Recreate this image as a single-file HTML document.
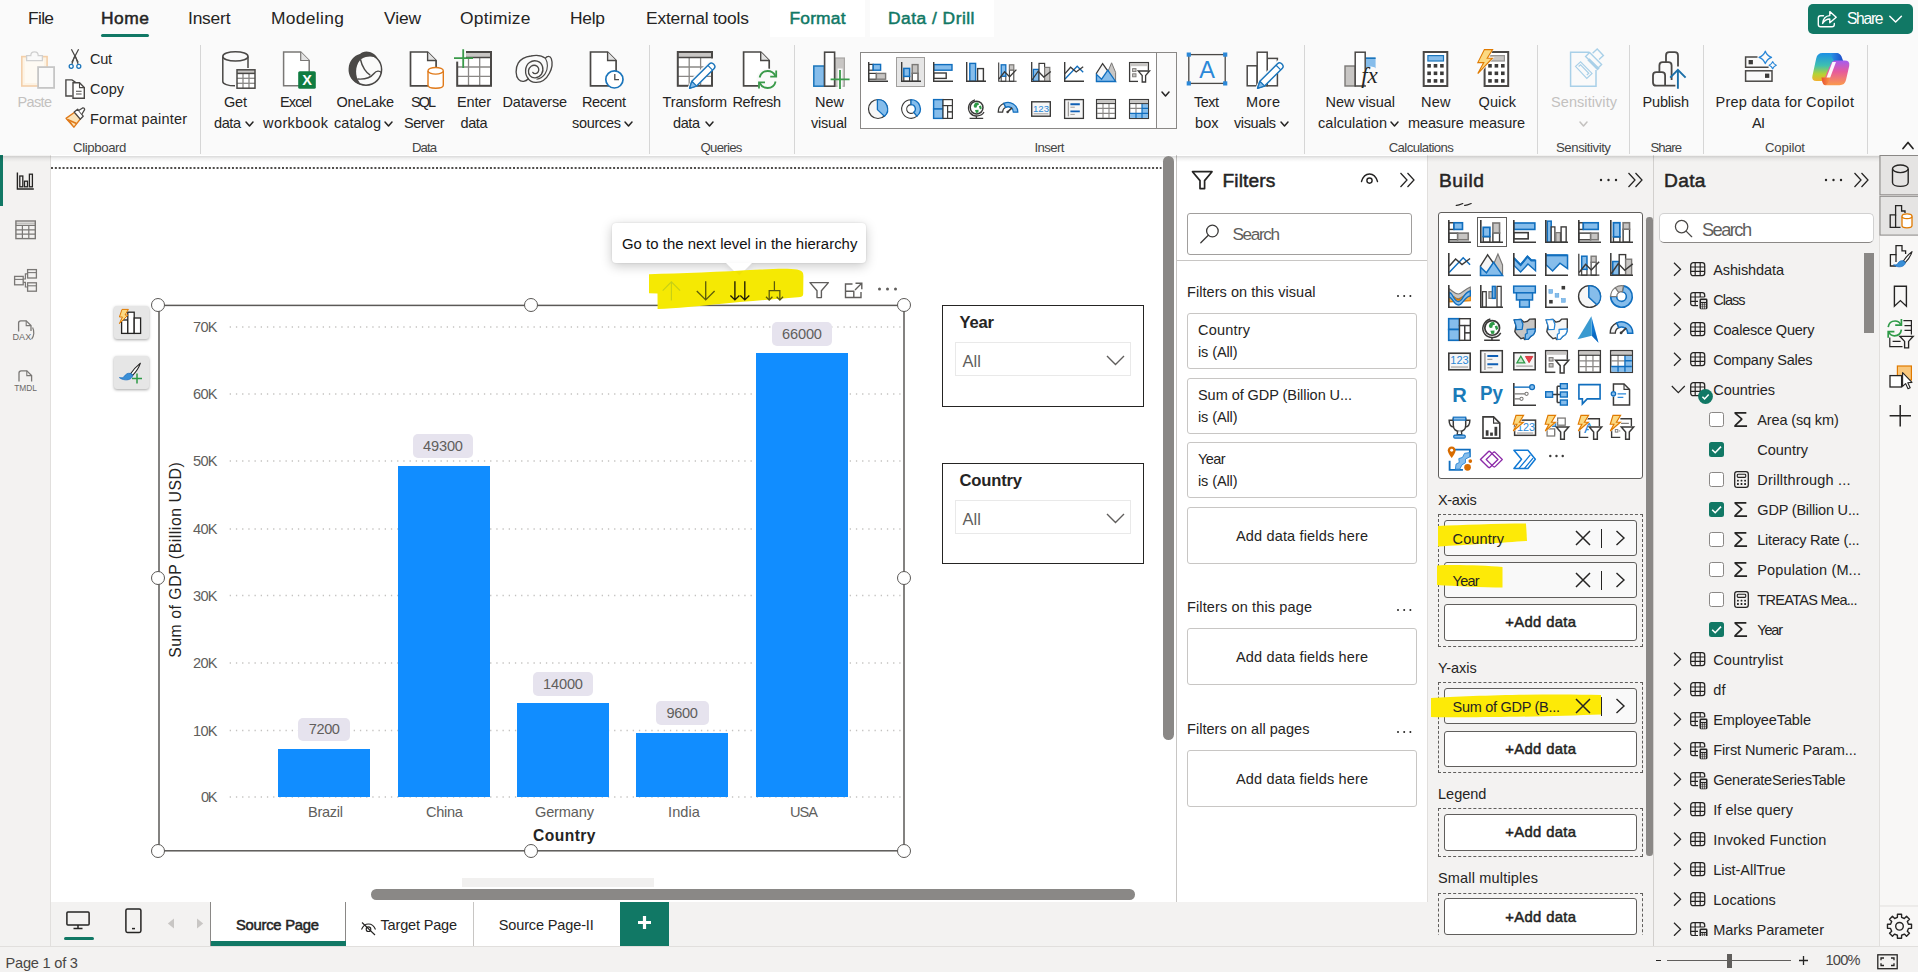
<!DOCTYPE html>
<html lang="en"><head><meta charset="utf-8"><title>Power BI Desktop - Source Page</title>
<style>
html,body{margin:0;padding:0;}
body{width:1918px;height:972px;overflow:hidden;position:relative;background:#f3f2f1;font-family:"Liberation Sans",sans-serif;}
body div,body span,body svg{position:absolute;display:block;}
span{white-space:nowrap;}
svg{overflow:visible;}
</style></head><body>
<div style="left:0px;top:0px;width:1918px;height:156px;background:#fafafa;"></div>
<div style="left:770px;top:0px;width:94.5px;height:37px;background:#fff;"></div>
<div style="left:869.5px;top:0px;width:124.5px;height:37px;background:#fff;"></div>
<div style="left:51px;top:155px;width:1125px;height:747px;background:#fff;"></div>
<div style="left:0px;top:155px;width:50px;height:791px;background:#f3f2f1;border-right:1px solid #e1dfdd;"></div>
<div style="left:0px;top:155px;width:3px;height:50.5px;background:#117865;"></div>
<div style="left:1175.5px;top:155px;width:251.5px;height:746.7px;background:#fff;border-left:1px solid #c8c6c4;box-sizing:border-box;"></div>
<div style="left:1427px;top:155px;width:226px;height:791px;background:#f3f2f1;border-left:1px solid #e1dfdd;box-sizing:border-box;"></div>
<div style="left:1653px;top:155px;width:226px;height:791px;background:#f3f2f1;border-left:1px solid #d2d0ce;box-sizing:border-box;"></div>
<div style="left:1879px;top:155px;width:39px;height:791px;background:#f8f7f6;border-left:1px solid #e1dfdd;box-sizing:border-box;"></div>
<div style="left:51px;top:901.7px;width:1376.5px;height:44.3px;background:#f3f2f1;"></div>
<div style="left:0px;top:156px;width:1918px;height:5.5px;background:linear-gradient(to bottom,rgba(0,0,0,0.15),rgba(0,0,0,0.05) 45%,rgba(0,0,0,0));"></div>
<span style="left:28.00px;top:10.27px;font-size:17.4px;line-height:17.4px;letter-spacing:-0.679px;color:#252423;">File</span>
<span style="left:101.00px;top:10.27px;font-size:17.4px;line-height:17.4px;letter-spacing:0.529px;color:#252423;-webkit-text-stroke:0.5px currentColor;">Home</span>
<div style="left:101px;top:34px;width:48px;height:3px;background:#117865;border-radius:1.5px;"></div>
<span style="left:188.00px;top:10.27px;font-size:17.4px;line-height:17.4px;letter-spacing:-0.203px;color:#252423;">Insert</span>
<span style="left:271.00px;top:10.27px;font-size:17.4px;line-height:17.4px;letter-spacing:0.341px;color:#252423;">Modeling</span>
<span style="left:384.00px;top:10.27px;font-size:17.4px;line-height:17.4px;letter-spacing:-0.133px;color:#252423;">View</span>
<span style="left:460.00px;top:10.27px;font-size:17.4px;line-height:17.4px;letter-spacing:0.264px;color:#252423;">Optimize</span>
<span style="left:570.00px;top:10.27px;font-size:17.4px;line-height:17.4px;letter-spacing:-0.262px;color:#252423;">Help</span>
<span style="left:646.00px;top:10.27px;font-size:17.4px;line-height:17.4px;letter-spacing:-0.186px;color:#252423;">External tools</span>
<span style="left:789.50px;top:10.27px;font-size:17.4px;line-height:17.4px;letter-spacing:0.179px;color:#117865;-webkit-text-stroke:0.5px currentColor;">Format</span>
<span style="left:888.00px;top:10.27px;font-size:17.4px;line-height:17.4px;letter-spacing:0.480px;color:#117865;-webkit-text-stroke:0.5px currentColor;">Data / Drill</span>
<div style="left:1807.5px;top:4px;width:105px;height:30px;background:#117865;border-radius:5px;"></div>
<span style="left:1847.00px;top:11.19px;font-size:15.6px;line-height:15.6px;letter-spacing:-1.282px;color:#fff;">Share</span>
<span style="left:17.50px;top:95.23px;font-size:14.5px;line-height:14.5px;letter-spacing:-0.645px;color:#c3c1bf;">Paste</span>
<span style="left:90.00px;top:51.53px;font-size:14.5px;line-height:14.5px;letter-spacing:-0.282px;color:#252423;">Cut</span>
<span style="left:90.00px;top:81.73px;font-size:14.5px;line-height:14.5px;letter-spacing:0.050px;color:#252423;">Copy</span>
<span style="left:90.00px;top:111.53px;font-size:14.5px;line-height:14.5px;letter-spacing:0.209px;color:#252423;">Format painter</span>
<span style="left:224.00px;top:95.23px;font-size:14.5px;line-height:14.5px;letter-spacing:-0.186px;color:#252423;">Get</span>
<span style="left:214.00px;top:115.93px;font-size:14.5px;line-height:14.5px;letter-spacing:-0.407px;color:#252423;">data</span>
<svg style="left:244.5px;top:121.0px;" width="9" height="6" viewBox="0 0 9 6"><path d="M1 1 L4.5 5 L8 1" fill="none" stroke="#252423" stroke-width="1.5" stroke-linecap="round" stroke-linejoin="round"/></svg>
<span style="left:280.00px;top:95.23px;font-size:14.5px;line-height:14.5px;letter-spacing:-0.864px;color:#252423;">Excel</span>
<span style="left:263.00px;top:115.93px;font-size:14.5px;line-height:14.5px;letter-spacing:0.420px;color:#252423;">workbook</span>
<span style="left:336.50px;top:95.23px;font-size:14.5px;line-height:14.5px;letter-spacing:-0.225px;color:#252423;">OneLake</span>
<span style="left:334.00px;top:115.93px;font-size:14.5px;line-height:14.5px;letter-spacing:0.040px;color:#252423;">catalog</span>
<svg style="left:384.0px;top:121.0px;" width="9" height="6" viewBox="0 0 9 6"><path d="M1 1 L4.5 5 L8 1" fill="none" stroke="#252423" stroke-width="1.5" stroke-linecap="round" stroke-linejoin="round"/></svg>
<span style="left:411.00px;top:95.23px;font-size:14.5px;line-height:14.5px;letter-spacing:-2.007px;color:#252423;">SQL</span>
<span style="left:404.00px;top:115.93px;font-size:14.5px;line-height:14.5px;letter-spacing:-0.441px;color:#252423;">Server</span>
<span style="left:457.00px;top:95.23px;font-size:14.5px;line-height:14.5px;letter-spacing:-0.164px;color:#252423;">Enter</span>
<span style="left:460.50px;top:115.93px;font-size:14.5px;line-height:14.5px;letter-spacing:-0.407px;color:#252423;">data</span>
<span style="left:502.50px;top:95.23px;font-size:14.5px;line-height:14.5px;letter-spacing:-0.198px;color:#252423;">Dataverse</span>
<span style="left:582.00px;top:95.23px;font-size:14.5px;line-height:14.5px;letter-spacing:-0.389px;color:#252423;">Recent</span>
<span style="left:572.00px;top:115.93px;font-size:14.5px;line-height:14.5px;letter-spacing:-0.295px;color:#252423;">sources</span>
<svg style="left:624.0px;top:121.0px;" width="9" height="6" viewBox="0 0 9 6"><path d="M1 1 L4.5 5 L8 1" fill="none" stroke="#252423" stroke-width="1.5" stroke-linecap="round" stroke-linejoin="round"/></svg>
<span style="left:662.50px;top:95.23px;font-size:14.5px;line-height:14.5px;letter-spacing:-0.128px;color:#252423;">Transform</span>
<span style="left:673.00px;top:115.93px;font-size:14.5px;line-height:14.5px;letter-spacing:-0.407px;color:#252423;">data</span>
<svg style="left:704.5px;top:121.0px;" width="9" height="6" viewBox="0 0 9 6"><path d="M1 1 L4.5 5 L8 1" fill="none" stroke="#252423" stroke-width="1.5" stroke-linecap="round" stroke-linejoin="round"/></svg>
<span style="left:732.50px;top:95.23px;font-size:14.5px;line-height:14.5px;letter-spacing:-0.379px;color:#252423;">Refresh</span>
<span style="left:815.00px;top:95.23px;font-size:14.5px;line-height:14.5px;letter-spacing:-0.004px;color:#252423;">New</span>
<span style="left:811.00px;top:115.93px;font-size:14.5px;line-height:14.5px;letter-spacing:-0.214px;color:#252423;">visual</span>
<span style="left:1194.00px;top:95.23px;font-size:14.5px;line-height:14.5px;letter-spacing:-0.531px;color:#252423;">Text</span>
<span style="left:1195.00px;top:115.93px;font-size:14.5px;line-height:14.5px;letter-spacing:0.061px;color:#252423;">box</span>
<span style="left:1246.00px;top:95.23px;font-size:14.5px;line-height:14.5px;letter-spacing:0.321px;color:#252423;">More</span>
<span style="left:1234.00px;top:115.93px;font-size:14.5px;line-height:14.5px;letter-spacing:-0.387px;color:#252423;">visuals</span>
<svg style="left:1279.5px;top:121.0px;" width="9" height="6" viewBox="0 0 9 6"><path d="M1 1 L4.5 5 L8 1" fill="none" stroke="#252423" stroke-width="1.5" stroke-linecap="round" stroke-linejoin="round"/></svg>
<span style="left:1325.50px;top:95.23px;font-size:14.5px;line-height:14.5px;letter-spacing:-0.067px;color:#252423;">New visual</span>
<span style="left:1318.00px;top:115.93px;font-size:14.5px;line-height:14.5px;letter-spacing:0.049px;color:#252423;">calculation</span>
<svg style="left:1390.0px;top:121.0px;" width="9" height="6" viewBox="0 0 9 6"><path d="M1 1 L4.5 5 L8 1" fill="none" stroke="#252423" stroke-width="1.5" stroke-linecap="round" stroke-linejoin="round"/></svg>
<span style="left:1421.00px;top:95.23px;font-size:14.5px;line-height:14.5px;letter-spacing:0.246px;color:#252423;">New</span>
<span style="left:1408.00px;top:115.93px;font-size:14.5px;line-height:14.5px;letter-spacing:-0.119px;color:#252423;">measure</span>
<span style="left:1478.50px;top:95.23px;font-size:14.5px;line-height:14.5px;letter-spacing:0.109px;color:#252423;">Quick</span>
<span style="left:1469.00px;top:115.93px;font-size:14.5px;line-height:14.5px;letter-spacing:-0.069px;color:#252423;">measure</span>
<span style="left:1551.00px;top:95.23px;font-size:14.5px;line-height:14.5px;letter-spacing:0.073px;color:#c3c1bf;">Sensitivity</span>
<svg style="left:1578.5px;top:120.5px;" width="9" height="6" viewBox="0 0 9 6"><path d="M1 1 L4.5 5 L8 1" fill="none" stroke="#c3c1bf" stroke-width="1.5" stroke-linecap="round" stroke-linejoin="round"/></svg>
<span style="left:1642.50px;top:95.23px;font-size:14.5px;line-height:14.5px;letter-spacing:-0.176px;color:#252423;">Publish</span>
<span style="left:1715.50px;top:95.23px;font-size:14.5px;line-height:14.5px;letter-spacing:0.223px;color:#252423;">Prep data for</span>
<span style="left:1752.00px;top:115.93px;font-size:14.5px;line-height:14.5px;letter-spacing:-0.700px;color:#252423;">AI</span>
<span style="left:1806.00px;top:95.23px;font-size:14.5px;line-height:14.5px;letter-spacing:0.477px;color:#252423;">Copilot</span>
<span style="left:73.00px;top:140.63px;font-size:13.2px;line-height:13.2px;letter-spacing:-0.375px;color:#444;">Clipboard</span>
<span style="left:412.00px;top:140.63px;font-size:13.2px;line-height:13.2px;letter-spacing:-0.961px;color:#444;">Data</span>
<span style="left:700.50px;top:140.63px;font-size:13.2px;line-height:13.2px;letter-spacing:-0.703px;color:#444;">Queries</span>
<span style="left:1034.50px;top:140.63px;font-size:13.2px;line-height:13.2px;letter-spacing:-0.603px;color:#444;">Insert</span>
<span style="left:1388.70px;top:140.63px;font-size:13.2px;line-height:13.2px;letter-spacing:-0.600px;color:#444;">Calculations</span>
<span style="left:1556.00px;top:140.63px;font-size:13.2px;line-height:13.2px;letter-spacing:-0.442px;color:#444;">Sensitivity</span>
<span style="left:1650.50px;top:140.63px;font-size:13.2px;line-height:13.2px;letter-spacing:-0.931px;color:#444;">Share</span>
<span style="left:1765.00px;top:140.63px;font-size:13.2px;line-height:13.2px;letter-spacing:-0.182px;color:#444;">Copilot</span>
<div style="left:199.5px;top:44.5px;width:1px;height:109px;background:#d6d6d6;"></div>
<div style="left:649.0px;top:44.5px;width:1px;height:109px;background:#d6d6d6;"></div>
<div style="left:793.5px;top:44.5px;width:1px;height:109px;background:#d6d6d6;"></div>
<div style="left:1303.5px;top:44.5px;width:1px;height:109px;background:#d6d6d6;"></div>
<div style="left:1537.0px;top:44.5px;width:1px;height:109px;background:#d6d6d6;"></div>
<div style="left:1628.5px;top:44.5px;width:1px;height:109px;background:#d6d6d6;"></div>
<div style="left:1702.5px;top:44.5px;width:1px;height:109px;background:#d6d6d6;"></div>
<div style="left:1866.5px;top:44.5px;width:1px;height:109px;background:#d6d6d6;"></div>
<div style="left:860px;top:52px;width:316.5px;height:76.5px;border:1px solid #8a8886;box-sizing:border-box;background:#fff;"></div>
<div style="left:1156px;top:52px;width:1px;height:76.5px;background:#8a8886;"></div>
<div style="left:1157px;top:53px;width:18.5px;height:74.5px;background:#fafafa;"></div>
<svg style="left:1160.5px;top:91.0px;" width="9" height="6" viewBox="0 0 9 6"><path d="M1 1 L4.5 5 L8 1" fill="none" stroke="#252423" stroke-width="1.5" stroke-linecap="round" stroke-linejoin="round"/></svg>
<div style="left:895.5px;top:57px;width:29.5px;height:30px;background:#e6e6e6;border:1px solid #a19f9d;box-sizing:border-box;"></div>
<svg style="left:1901px;top:139px;" width="14" height="12" viewBox="0 0 14 12"><path d="M2 9.5 L7 3.5 L12 9.5" fill="none" stroke="#252423" stroke-width="1.7" stroke-linecap="round" stroke-linejoin="round"/></svg>
<svg style="left:0px;top:0px;" width="1918" height="972" viewBox="0 0 1918 972"><path d="M51 167.9 L1161.5 167.9" stroke="#4f4d4b" stroke-width="2" stroke-dasharray="2 1.85" fill="none"/></svg>
<div style="left:1163px;top:156px;width:11px;height:584px;background:#8a8886;border-radius:5.5px;"></div>
<div style="left:370.5px;top:889px;width:764.5px;height:10.5px;background:#8a8886;border-radius:5.25px;"></div>
<div style="left:462px;top:877.5px;width:192px;height:9px;background:#f1f0ef;"></div>
<svg style="left:0px;top:0px;" width="1918" height="972" viewBox="0 0 1918 972"><path d="M229.7 797 L900.5 797" stroke="#c4c2c0" stroke-width="1.5" stroke-dasharray="1.3 4.9" fill="none"/><path d="M229.7 730.5 L900.5 730.5" stroke="#c4c2c0" stroke-width="1.5" stroke-dasharray="1.3 4.9" fill="none"/><path d="M229.7 663 L900.5 663" stroke="#c4c2c0" stroke-width="1.5" stroke-dasharray="1.3 4.9" fill="none"/><path d="M229.7 595.5 L900.5 595.5" stroke="#c4c2c0" stroke-width="1.5" stroke-dasharray="1.3 4.9" fill="none"/><path d="M229.7 529 L900.5 529" stroke="#c4c2c0" stroke-width="1.5" stroke-dasharray="1.3 4.9" fill="none"/><path d="M229.7 461 L900.5 461" stroke="#c4c2c0" stroke-width="1.5" stroke-dasharray="1.3 4.9" fill="none"/><path d="M229.7 394 L900.5 394" stroke="#c4c2c0" stroke-width="1.5" stroke-dasharray="1.3 4.9" fill="none"/><path d="M229.7 327 L900.5 327" stroke="#c4c2c0" stroke-width="1.5" stroke-dasharray="1.3 4.9" fill="none"/></svg>
<span style="left:201.00px;top:790.04px;font-size:14.6px;line-height:14.6px;letter-spacing:-1.358px;color:#605e5c;">0K</span>
<span style="left:193.00px;top:723.54px;font-size:14.6px;line-height:14.6px;letter-spacing:-0.739px;color:#605e5c;">10K</span>
<span style="left:193.00px;top:656.04px;font-size:14.6px;line-height:14.6px;letter-spacing:-0.739px;color:#605e5c;">20K</span>
<span style="left:193.00px;top:588.54px;font-size:14.6px;line-height:14.6px;letter-spacing:-0.739px;color:#605e5c;">30K</span>
<span style="left:193.00px;top:522.04px;font-size:14.6px;line-height:14.6px;letter-spacing:-0.739px;color:#605e5c;">40K</span>
<span style="left:193.00px;top:454.04px;font-size:14.6px;line-height:14.6px;letter-spacing:-0.739px;color:#605e5c;">50K</span>
<span style="left:193.00px;top:387.04px;font-size:14.6px;line-height:14.6px;letter-spacing:-0.739px;color:#605e5c;">60K</span>
<span style="left:193.00px;top:320.04px;font-size:14.6px;line-height:14.6px;letter-spacing:-0.739px;color:#605e5c;">70K</span>
<div style="left:278px;top:748.75px;width:92px;height:48.450000000000045px;background:#118dff;"></div>
<span style="left:308.00px;top:805.24px;font-size:14.6px;line-height:14.6px;letter-spacing:-0.302px;color:#605e5c;">Brazil</span>
<div style="left:397.5px;top:465.5px;width:92.0px;height:331.70000000000005px;background:#118dff;"></div>
<span style="left:426.00px;top:805.24px;font-size:14.6px;line-height:14.6px;letter-spacing:-0.287px;color:#605e5c;">China</span>
<div style="left:516.75px;top:703px;width:92.0px;height:94.20000000000005px;background:#118dff;"></div>
<span style="left:535.00px;top:805.24px;font-size:14.6px;line-height:14.6px;letter-spacing:-0.173px;color:#605e5c;">Germany</span>
<div style="left:635.75px;top:733px;width:92.25px;height:64.20000000000005px;background:#118dff;"></div>
<span style="left:668.00px;top:805.24px;font-size:14.6px;line-height:14.6px;letter-spacing:0.085px;color:#605e5c;">India</span>
<div style="left:755.75px;top:353px;width:92.0px;height:444.20000000000005px;background:#118dff;"></div>
<span style="left:790.00px;top:805.24px;font-size:14.6px;line-height:14.6px;letter-spacing:-1.010px;color:#605e5c;">USA</span>
<div style="left:298px;top:717.5px;width:52px;height:23.6px;background:#e6e3ee;border-radius:5px;"></div>
<span style="left:308.75px;top:722.44px;font-size:14.6px;line-height:14.6px;letter-spacing:-0.410px;color:#605e5c;">7200</span>
<div style="left:413px;top:434px;width:60px;height:23.6px;background:#e6e3ee;border-radius:5px;"></div>
<span style="left:423.00px;top:438.94px;font-size:14.6px;line-height:14.6px;letter-spacing:-0.150px;color:#605e5c;">49300</span>
<div style="left:532.5px;top:672px;width:60.0px;height:23.6px;background:#e6e3ee;border-radius:5px;"></div>
<span style="left:543.00px;top:676.94px;font-size:14.6px;line-height:14.6px;letter-spacing:-0.150px;color:#605e5c;">14000</span>
<div style="left:656px;top:701px;width:52.75px;height:23.6px;background:#e6e3ee;border-radius:5px;"></div>
<span style="left:666.50px;top:705.94px;font-size:14.6px;line-height:14.6px;letter-spacing:-0.327px;color:#605e5c;">9600</span>
<div style="left:772px;top:322px;width:60px;height:23.6px;background:#e6e3ee;border-radius:5px;"></div>
<span style="left:782.00px;top:326.94px;font-size:14.6px;line-height:14.6px;letter-spacing:-0.150px;color:#605e5c;">66000</span>
<span style="left:533.00px;top:827.79px;font-size:15.6px;line-height:15.6px;letter-spacing:0.451px;color:#252423;font-weight:700;">Country</span>
<span style="left:180.6px;top:641.50px;font-size:15.8px;line-height:15.8px;letter-spacing:0.534px;color:#252423;transform-origin:0 13.37px;transform:translateY(2.43px) rotate(-90deg);">Sum of GDP (Billion USD)</span>
<svg style="left:0px;top:0px;" width="1918" height="972" viewBox="0 0 1918 972"><rect x="159" y="305.4" width="745" height="545.4" fill="none" stroke="#5b5957" stroke-width="1.5"/></svg>
<div style="left:151.2px;top:297.6px;width:14px;height:14px;border:1.3px solid #5b5957;border-radius:50%;background:#fff;box-sizing:border-box;"></div>
<div style="left:524px;top:297.6px;width:14px;height:14px;border:1.3px solid #5b5957;border-radius:50%;background:#fff;box-sizing:border-box;"></div>
<div style="left:897px;top:297.6px;width:14px;height:14px;border:1.3px solid #5b5957;border-radius:50%;background:#fff;box-sizing:border-box;"></div>
<div style="left:151.2px;top:570.75px;width:14px;height:14px;border:1.3px solid #5b5957;border-radius:50%;background:#fff;box-sizing:border-box;"></div>
<div style="left:897px;top:570.75px;width:14px;height:14px;border:1.3px solid #5b5957;border-radius:50%;background:#fff;box-sizing:border-box;"></div>
<div style="left:151.2px;top:843.6px;width:14px;height:14px;border:1.3px solid #5b5957;border-radius:50%;background:#fff;box-sizing:border-box;"></div>
<div style="left:524px;top:843.6px;width:14px;height:14px;border:1.3px solid #5b5957;border-radius:50%;background:#fff;box-sizing:border-box;"></div>
<div style="left:897px;top:843.6px;width:14px;height:14px;border:1.3px solid #5b5957;border-radius:50%;background:#fff;box-sizing:border-box;"></div>
<div style="left:114px;top:305.5px;width:34.5px;height:33.5px;background:#e6e6e6;border-radius:3px;box-shadow:0 1px 3px rgba(0,0,0,.35);"></div>
<div style="left:114px;top:355.5px;width:34.5px;height:33.5px;background:#e6e6e6;border-radius:3px;box-shadow:0 1px 3px rgba(0,0,0,.35);"></div>
<div style="left:942px;top:305px;width:202px;height:102px;border:1.3px solid #252423;box-sizing:border-box;background:#fff;"></div>
<span style="left:959.50px;top:314.70px;font-size:16.6px;line-height:16.6px;letter-spacing:-0.194px;color:#252423;font-weight:700;">Year</span>
<div style="left:955px;top:342px;width:176px;height:33.5px;border:1px solid #e9e9e9;box-sizing:border-box;"></div>
<span style="left:962.50px;top:353.12px;font-size:16.4px;line-height:16.4px;letter-spacing:0.137px;color:#605e5c;">All</span>
<svg style="left:1106px;top:354.5px;" width="19" height="11" viewBox="0 0 19 11"><path d="M1 1 L9.5 9.5 L18 1" fill="none" stroke="#605e5c" stroke-width="1.4"/></svg>
<div style="left:942px;top:463px;width:202px;height:100.5px;border:1.3px solid #252423;box-sizing:border-box;background:#fff;"></div>
<span style="left:959.50px;top:472.70px;font-size:16.6px;line-height:16.6px;letter-spacing:-0.188px;color:#252423;font-weight:700;">Country</span>
<div style="left:955px;top:500px;width:176px;height:33.5px;border:1px solid #e9e9e9;box-sizing:border-box;"></div>
<span style="left:962.50px;top:511.12px;font-size:16.4px;line-height:16.4px;letter-spacing:0.137px;color:#605e5c;">All</span>
<svg style="left:1106px;top:512.5px;" width="19" height="11" viewBox="0 0 19 11"><path d="M1 1 L9.5 9.5 L18 1" fill="none" stroke="#605e5c" stroke-width="1.4"/></svg>
<div style="left:612px;top:222.5px;width:254px;height:40.5px;background:#fff;border-radius:4px;box-shadow:0 3px 12px rgba(0,0,0,.22),0 0 2px rgba(0,0,0,.12);"></div>
<svg style="left:726px;top:262.5px;filter:drop-shadow(0 3px 3px rgba(0,0,0,.12));" width="26" height="14" viewBox="0 0 26 14"><path d="M0 0 L26 0 L13 13 Z" fill="#fff"/></svg>
<svg style="left:0px;top:0px;" width="1918" height="972" viewBox="0 0 1918 972"><path d="M649 274.2 C680 273.6 720 272 760 269.6 C775 268.8 790 268.4 797 269.6 C802 270.6 803.4 272.5 803.4 276 L803.2 294 C803.2 296.4 801.5 297 798 297.3 C770 299.5 745 301.5 722 303.8 C700 306 675 308.5 657.6 309 L657.5 293.4 L649 293.3 Z" fill="#f5e903"/><path d="M735.4 271.4 L743.2 270.9 L739.2 275.2 Z" fill="#efe104"/></svg>
<span style="left:622.00px;top:236.79px;font-size:14.9px;line-height:14.9px;letter-spacing:0.031px;color:#111;">Go to the next level in the hierarchy</span>
<svg style="left:0px;top:0px;pointer-events:none;" width="1918" height="972" viewBox="0 0 1918 972"><path d="M671.4 300.4 L671.4 281.8 M662.6999999999999 290.7 L671.4 281.8 L680.1 290.7" fill="none" stroke="#c6cf16" stroke-width="1.1"/><path d="M705.7 281.3 L705.7 299.9 M696.8000000000001 291.0 L705.7 299.9 L714.6 291.0" fill="none" stroke="#5f5e0a" stroke-width="1.35"/><path d="M734.9 281.3 L734.9 299.8 M730.4 295.4 L734.9 299.9 L739.4 295.400" fill="none" stroke="#1c1a05" stroke-width="1.35"/><path d="M744.8 281.3 L744.8 299.8 M740.3 295.4 L744.8 299.9 L749.3 295.400" fill="none" stroke="#1c1a05" stroke-width="1.35"/><path d="M774.4 281.3 L774.4 290.7 M769.2 300 L769.2 290.7 L779.85 290.7 L779.85 300 M766 296.7 L769.2 300.1 L772.4 296.7 M776.65 296.7 L779.85 300.1 L783.05 296.7" fill="none" stroke="#5a590c" stroke-width="1.25"/><path d="M810 282.6 L828.4 282.6 L821.4 290.8 L821.4 297.6 L817 297.6 L817 290.8 Z" fill="none" stroke="#605e5c" stroke-width="1.4" stroke-linejoin="round"/><path d="M852.5 284 L845.5 284 L845.5 297.5 L861 297.5 L861 292" fill="none" stroke="#605e5c" stroke-width="1.4"/><path d="M845.5 291.3 L853.8 291.3 L853.8 297.5" fill="none" stroke="#605e5c" stroke-width="1.4"/><path d="M855.5 283.2 L861.8 283.2 L861.8 289.3 M861.5 283.5 L855 290" fill="none" stroke="#605e5c" stroke-width="1.4"/><circle cx="879.5" cy="289" r="1.5" fill="#605e5c"/><circle cx="887.5" cy="289" r="1.5" fill="#605e5c"/><circle cx="895.5" cy="289" r="1.5" fill="#605e5c"/></svg>
<svg style="left:1190.6px;top:170.2px;" width="23" height="21" viewBox="0 0 23 21"><path d="M1.5 1.7 L21 1.7 L13.6 10.6 L13.6 18.6 L9 18.6 L9 10.6 Z" fill="none" stroke="#252423" stroke-width="1.7" stroke-linejoin="round"/></svg>
<span style="left:1222.50px;top:171.25px;font-size:19.2px;line-height:19.2px;letter-spacing:0.122px;color:#252423;-webkit-text-stroke:0.5px currentColor;">Filters</span>
<svg style="left:1360px;top:172px;" width="19" height="14" viewBox="0 0 19 14"><path d="M1.5 9.5 C3 4.5 6 2 9.5 2 C13 2 16 4.5 17.5 9.5" fill="none" stroke="#252423" stroke-width="1.4" stroke-linecap="round"/><circle cx="9.5" cy="8.6" r="2.6" fill="none" stroke="#252423" stroke-width="1.4"/></svg>
<svg style="left:1398.5px;top:171.8px;" width="17" height="16" viewBox="0 0 17 16"><path d="M1.5 1 L8 8 L1.5 15 M8.5 1 L15 8 L8.5 15" fill="none" stroke="#252423" stroke-width="1.25"/></svg>
<div style="left:1187px;top:213px;width:224.5px;height:41.5px;border:1px solid #a19f9d;border-radius:3px;box-sizing:border-box;background:#fff;"></div>
<svg style="left:1199.4px;top:222.7px;" width="22" height="22" viewBox="0 0 22 22"><circle cx="13.4" cy="8" r="5.8" fill="none" stroke="#3b3a39" stroke-width="1.3"/><path d="M9.3 12.2 L1.8 19.8" stroke="#3b3a39" stroke-width="1.3" stroke-linecap="round"/></svg>
<span style="left:1232.50px;top:226.34px;font-size:17.2px;line-height:17.2px;letter-spacing:-1.400px;color:#605e5c;">Search</span>
<div style="left:1177px;top:260px;width:250px;height:1px;background:#c8c6c4;"></div>
<span style="left:1187.00px;top:284.73px;font-size:14.5px;line-height:14.5px;letter-spacing:0.056px;color:#252423;">Filters on this visual</span>
<svg style="left:1395.1px;top:292.5px;" width="18.4" height="6" viewBox="0 0 18.4 6"><circle cx="3.0" cy="3" r="1.0" fill="#252423"/><circle cx="9.2" cy="3" r="1.0" fill="#252423"/><circle cx="15.4" cy="3" r="1.0" fill="#252423"/></svg>
<div style="left:1187px;top:313px;width:229.5px;height:56px;border:1px solid #c8c6c4;border-radius:3px;box-sizing:border-box;background:#fff;"></div>
<span style="left:1198.00px;top:322.73px;font-size:14.5px;line-height:14.5px;letter-spacing:0.205px;color:#252423;">Country</span>
<span style="left:1198.00px;top:345.33px;font-size:14.5px;line-height:14.5px;letter-spacing:-0.110px;color:#252423;">is (All)</span>
<div style="left:1187px;top:378px;width:229.5px;height:56px;border:1px solid #c8c6c4;border-radius:3px;box-sizing:border-box;background:#fff;"></div>
<span style="left:1198.00px;top:387.73px;font-size:14.5px;line-height:14.5px;letter-spacing:-0.054px;color:#252423;">Sum of GDP (Billion U...</span>
<span style="left:1198.00px;top:410.33px;font-size:14.5px;line-height:14.5px;letter-spacing:-0.110px;color:#252423;">is (All)</span>
<div style="left:1187px;top:442px;width:229.5px;height:56px;border:1px solid #c8c6c4;border-radius:3px;box-sizing:border-box;background:#fff;"></div>
<span style="left:1198.00px;top:451.73px;font-size:14.5px;line-height:14.5px;letter-spacing:-0.599px;color:#252423;">Year</span>
<span style="left:1198.00px;top:474.33px;font-size:14.5px;line-height:14.5px;letter-spacing:-0.110px;color:#252423;">is (All)</span>
<div style="left:1187px;top:507px;width:229.5px;height:56.5px;border:1px solid #c8c6c4;border-radius:3px;box-sizing:border-box;background:#fff;"></div>
<span style="left:1236.00px;top:528.53px;font-size:14.5px;line-height:14.5px;letter-spacing:0.159px;color:#252423;">Add data fields here</span>
<div style="left:1187px;top:628px;width:229.5px;height:56.5px;border:1px solid #c8c6c4;border-radius:3px;box-sizing:border-box;background:#fff;"></div>
<span style="left:1236.00px;top:649.53px;font-size:14.5px;line-height:14.5px;letter-spacing:0.159px;color:#252423;">Add data fields here</span>
<div style="left:1187px;top:750px;width:229.5px;height:56.5px;border:1px solid #c8c6c4;border-radius:3px;box-sizing:border-box;background:#fff;"></div>
<span style="left:1236.00px;top:771.53px;font-size:14.5px;line-height:14.5px;letter-spacing:0.159px;color:#252423;">Add data fields here</span>
<span style="left:1187.00px;top:599.93px;font-size:14.5px;line-height:14.5px;letter-spacing:0.131px;color:#252423;">Filters on this page</span>
<svg style="left:1395.1px;top:606.5px;" width="18.4" height="6" viewBox="0 0 18.4 6"><circle cx="3.0" cy="3" r="1.0" fill="#252423"/><circle cx="9.2" cy="3" r="1.0" fill="#252423"/><circle cx="15.4" cy="3" r="1.0" fill="#252423"/></svg>
<span style="left:1187.00px;top:721.73px;font-size:14.5px;line-height:14.5px;letter-spacing:0.037px;color:#252423;">Filters on all pages</span>
<svg style="left:1395.1px;top:728.5px;" width="18.4" height="6" viewBox="0 0 18.4 6"><circle cx="3.0" cy="3" r="1.0" fill="#252423"/><circle cx="9.2" cy="3" r="1.0" fill="#252423"/><circle cx="15.4" cy="3" r="1.0" fill="#252423"/></svg>
<span style="left:1439.00px;top:171.25px;font-size:19.2px;line-height:19.2px;letter-spacing:0.576px;color:#252423;-webkit-text-stroke:0.5px currentColor;">Build</span>
<svg style="left:1597.5px;top:176.8px;" width="21.0" height="6" viewBox="0 0 21.0 6"><circle cx="3.0" cy="3" r="1.2" fill="#252423"/><circle cx="10.5" cy="3" r="1.2" fill="#252423"/><circle cx="18.0" cy="3" r="1.2" fill="#252423"/></svg>
<svg style="left:1627px;top:171.8px;" width="17" height="16" viewBox="0 0 17 16"><path d="M1.5 1 L8 8 L1.5 15 M8.5 1 L15 8 L8.5 15" fill="none" stroke="#252423" stroke-width="1.25"/></svg>
<svg style="left:1454.6px;top:200px;" width="20" height="7" viewBox="0 0 20 7"><path d="M1.2 5.3 C2.6 5.7 5 4.700 7.800 3.500 M9.600 5.300 C11 5.700 13.400 4.700 16.200 3.500" fill="none" stroke="#252423" stroke-width="1.2" stroke-linecap="round"/></svg>
<div style="left:1438px;top:212px;width:205px;height:266.5px;border:1px solid #605e5c;border-radius:3px;box-sizing:border-box;background:#fff;"></div>
<div style="left:1476.9px;top:216.7px;width:30px;height:30px;border:1px solid #605e5c;box-sizing:border-box;background:#fff;"></div>
<div style="left:1646px;top:217px;width:6.5px;height:639px;background:#8a8886;border-radius:3.25px;"></div>
<span style="left:1438.00px;top:493.23px;font-size:14.5px;line-height:14.5px;letter-spacing:-0.317px;color:#252423;">X-axis</span>
<div style="left:1438px;top:513.8px;width:205px;height:133.2px;border:1px dashed #605e5c;box-sizing:border-box;"></div>
<div style="left:1444px;top:520.3px;width:192.7px;height:36px;border:1px solid #605e5c;border-radius:3px;box-sizing:border-box;background:#f9f9f9;"></div>
<svg style="left:1436px;top:522px;" width="95" height="28" viewBox="0 0 95 28"><path d="M2 4 C25 3 60 1.5 90 1.5 L91 19 C70 20.5 30 23 2 24.5 Z" fill="#fdea07"/></svg>
<span style="left:1452.60px;top:532.23px;font-size:14.5px;line-height:14.5px;letter-spacing:0.105px;color:#252423;">Country</span>
<svg style="left:1574.5px;top:530.3px;" width="16" height="16" viewBox="0 0 16 16"><path d="M1 1 L15 15 M15 1 L1 15" stroke="#252423" stroke-width="1.5" fill="none"/></svg>
<div style="left:1600.5px;top:528.8px;width:1px;height:19px;background:#252423;"></div>
<svg style="left:1614.5px;top:530.3px;" width="11" height="16" viewBox="0 0 11 16"><path d="M1.5 1 L9 8 L1.5 15" stroke="#252423" stroke-width="1.4" fill="none"/></svg>
<div style="left:1444px;top:562px;width:192.7px;height:36px;border:1px solid #605e5c;border-radius:3px;box-sizing:border-box;background:#f9f9f9;"></div>
<svg style="left:1434px;top:563px;" width="72" height="28" viewBox="0 0 72 28"><path d="M3 2.5 C20 1.5 50 2.5 68.5 4 L68.5 24.5 C50 24.5 20 23 3 22 Z" fill="#fdea07"/></svg>
<span style="left:1452.60px;top:573.93px;font-size:14.5px;line-height:14.5px;letter-spacing:-0.799px;color:#252423;">Year</span>
<svg style="left:1574.5px;top:572px;" width="16" height="16" viewBox="0 0 16 16"><path d="M1 1 L15 15 M15 1 L1 15" stroke="#252423" stroke-width="1.5" fill="none"/></svg>
<div style="left:1600.5px;top:570.5px;width:1px;height:19px;background:#252423;"></div>
<svg style="left:1614.5px;top:572px;" width="11" height="16" viewBox="0 0 11 16"><path d="M1.5 1 L9 8 L1.5 15" stroke="#252423" stroke-width="1.4" fill="none"/></svg>
<div style="left:1444px;top:604px;width:192.7px;height:36.5px;border:1px solid #605e5c;border-radius:3px;box-sizing:border-box;background:#fff;"></div>
<span style="left:1505.30px;top:615.47px;font-size:14.8px;line-height:14.8px;letter-spacing:0.351px;color:#252423;-webkit-text-stroke:0.5px currentColor;">+Add data</span>
<span style="left:1438.00px;top:661.03px;font-size:14.5px;line-height:14.5px;letter-spacing:-0.051px;color:#252423;">Y-axis</span>
<div style="left:1438px;top:682.4px;width:205px;height:90.6px;border:1px dashed #605e5c;box-sizing:border-box;"></div>
<div style="left:1444px;top:688.3px;width:192.7px;height:36px;border:1px solid #605e5c;border-radius:3px;box-sizing:border-box;background:#f9f9f9;"></div>
<svg style="left:1429px;top:692px;" width="175" height="28" viewBox="0 0 175 28"><path d="M2 6 C40 3.5 120 1.5 172 3 L172 22.5 C120 24.5 40 26 2 25 Z" fill="#fdea07"/></svg>
<span style="left:1452.60px;top:700.23px;font-size:14.5px;line-height:14.5px;letter-spacing:-0.289px;color:#252423;">Sum of GDP (B...</span>
<svg style="left:1574.5px;top:698.3px;" width="16" height="16" viewBox="0 0 16 16"><path d="M1 1 L15 15 M15 1 L1 15" stroke="#252423" stroke-width="1.5" fill="none"/></svg>
<div style="left:1600.5px;top:696.8px;width:1px;height:19px;background:#252423;"></div>
<svg style="left:1614.5px;top:698.3px;" width="11" height="16" viewBox="0 0 11 16"><path d="M1.5 1 L9 8 L1.5 15" stroke="#252423" stroke-width="1.4" fill="none"/></svg>
<div style="left:1444px;top:730.5px;width:192.7px;height:36.5px;border:1px solid #605e5c;border-radius:3px;box-sizing:border-box;background:#fff;"></div>
<span style="left:1505.30px;top:741.97px;font-size:14.8px;line-height:14.8px;letter-spacing:0.351px;color:#252423;-webkit-text-stroke:0.5px currentColor;">+Add data</span>
<span style="left:1438.00px;top:786.73px;font-size:14.5px;line-height:14.5px;letter-spacing:0.003px;color:#252423;">Legend</span>
<div style="left:1438px;top:808px;width:205px;height:48.5px;border:1px dashed #605e5c;box-sizing:border-box;"></div>
<div style="left:1444px;top:814px;width:192.7px;height:36.5px;border:1px solid #605e5c;border-radius:3px;box-sizing:border-box;background:#fff;"></div>
<span style="left:1505.30px;top:825.47px;font-size:14.8px;line-height:14.8px;letter-spacing:0.351px;color:#252423;-webkit-text-stroke:0.5px currentColor;">+Add data</span>
<span style="left:1438.00px;top:870.73px;font-size:14.5px;line-height:14.5px;letter-spacing:0.179px;color:#252423;">Small multiples</span>
<div style="left:1438px;top:893px;width:205px;height:60px;border:1px dashed #605e5c;box-sizing:border-box;"></div>
<div style="left:1436px;top:934.8px;width:210px;height:20px;background:#f3f2f1;"></div>
<div style="left:1444px;top:898.2px;width:192.7px;height:36.5px;border:1px solid #605e5c;border-radius:3px;box-sizing:border-box;background:#fff;"></div>
<span style="left:1505.30px;top:909.67px;font-size:14.8px;line-height:14.8px;letter-spacing:0.351px;color:#252423;-webkit-text-stroke:0.5px currentColor;">+Add data</span>
<div style="left:1428px;top:934.8px;width:224px;height:11.2px;background:#f3f2f1;"></div>
<span style="left:1664.00px;top:171.25px;font-size:19.2px;line-height:19.2px;letter-spacing:0.315px;color:#252423;-webkit-text-stroke:0.5px currentColor;">Data</span>
<svg style="left:1823.0px;top:176.8px;" width="21.0" height="6" viewBox="0 0 21.0 6"><circle cx="3.0" cy="3" r="1.2" fill="#252423"/><circle cx="10.5" cy="3" r="1.2" fill="#252423"/><circle cx="18.0" cy="3" r="1.2" fill="#252423"/></svg>
<svg style="left:1853px;top:171.8px;" width="17" height="16" viewBox="0 0 17 16"><path d="M1.5 1 L8 8 L1.5 15 M8.5 1 L15 8 L8.5 15" fill="none" stroke="#252423" stroke-width="1.25"/></svg>
<div style="left:1659px;top:212.9px;width:214.5px;height:29.8px;border:1px solid #d1d1d1;border-bottom:1.5px solid #8a8886;border-radius:5px;box-sizing:border-box;background:#fff;"></div>
<svg style="left:1674px;top:218px;" width="20" height="20" viewBox="0 0 20 20"><circle cx="7.6" cy="8.6" r="6.2" fill="none" stroke="#4a4846" stroke-width="1.25"/><path d="M12.1 13.1 L17.7 18.7" stroke="#4a4846" stroke-width="1.25" stroke-linecap="round"/></svg>
<span style="left:1701.90px;top:220.91px;font-size:18.3px;line-height:18.3px;letter-spacing:-1.537px;color:#605e5c;">Search</span>
<div style="left:1864px;top:252.5px;width:9.5px;height:80px;background:#8a8886;"></div>
<svg style="left:1673px;top:262.0px;" width="9" height="15" viewBox="0 0 9 15"><path d="M1 0.8 L7.6 7.3 L1 13.8" fill="none" stroke="#252423" stroke-width="1.2"/></svg>
<svg style="left:1690.3px;top:262.1px;" width="16" height="15" viewBox="0 0 16 15"><rect x="0.7" y="0.7" width="14" height="13" rx="2.6" fill="none" stroke="#252423" stroke-width="1.3"/><path d="M5.2 0.7 L5.2 13.7 M10.2 0.7 L10.2 13.7 M0.7 5 L14.7 5 M0.7 9.4 L14.7 9.4" stroke="#252423" stroke-width="1.2" fill="none"/></svg>
<span style="left:1713.20px;top:262.53px;font-size:14.5px;line-height:14.5px;letter-spacing:-0.105px;color:#252423;">Ashishdata</span>
<svg style="left:1673px;top:292.0px;" width="9" height="15" viewBox="0 0 9 15"><path d="M1 0.8 L7.6 7.3 L1 13.8" fill="none" stroke="#252423" stroke-width="1.2"/></svg>
<svg style="left:1690.3px;top:292.1px;" width="19" height="18" viewBox="0 0 19 18"><path d="M8 13.7 L3.2 13.7 Q0.7 13.7 0.7 11.2 L0.7 3.2 Q0.7 0.7 3.2 0.7 L12.2 0.7 Q14.7 0.7 14.7 3.2 L14.7 5" fill="none" stroke="#252423" stroke-width="1.3"/><path d="M5.2 0.7 L5.2 13.7 M10.2 0.7 L10.2 5 M0.7 5 L14.7 5 M0.7 9.4 L8 9.4" stroke="#252423" stroke-width="1.2" fill="none"/><rect x="9.5" y="6.6" width="8" height="10.6" rx="1.4" fill="#252423"/><rect x="11" y="8.1" width="5" height="1.8" fill="#f3f2f1"/><rect x="11" y="11.2" width="1.3" height="1.3" fill="#f3f2f1"/><rect x="11" y="13.2" width="1.3" height="1.3" fill="#f3f2f1"/><rect x="11" y="15.2" width="1.3" height="1.3" fill="#f3f2f1"/><rect x="12.85" y="11.2" width="1.3" height="1.3" fill="#f3f2f1"/><rect x="12.85" y="13.2" width="1.3" height="1.3" fill="#f3f2f1"/><rect x="12.85" y="15.2" width="1.3" height="1.3" fill="#f3f2f1"/><rect x="14.7" y="11.2" width="1.3" height="1.3" fill="#f3f2f1"/><rect x="14.7" y="13.2" width="1.3" height="1.3" fill="#f3f2f1"/><rect x="14.7" y="15.2" width="1.3" height="1.3" fill="#f3f2f1"/></svg>
<span style="left:1713.20px;top:292.53px;font-size:14.5px;line-height:14.5px;letter-spacing:-0.989px;color:#252423;">Class</span>
<svg style="left:1673px;top:322.0px;" width="9" height="15" viewBox="0 0 9 15"><path d="M1 0.8 L7.6 7.3 L1 13.8" fill="none" stroke="#252423" stroke-width="1.2"/></svg>
<svg style="left:1690.3px;top:322.1px;" width="16" height="15" viewBox="0 0 16 15"><rect x="0.7" y="0.7" width="14" height="13" rx="2.6" fill="none" stroke="#252423" stroke-width="1.3"/><path d="M5.2 0.7 L5.2 13.7 M10.2 0.7 L10.2 13.7 M0.7 5 L14.7 5 M0.7 9.4 L14.7 9.4" stroke="#252423" stroke-width="1.2" fill="none"/></svg>
<span style="left:1713.20px;top:322.53px;font-size:14.5px;line-height:14.5px;letter-spacing:-0.205px;color:#252423;">Coalesce Query</span>
<svg style="left:1673px;top:352.0px;" width="9" height="15" viewBox="0 0 9 15"><path d="M1 0.8 L7.6 7.3 L1 13.8" fill="none" stroke="#252423" stroke-width="1.2"/></svg>
<svg style="left:1690.3px;top:352.1px;" width="16" height="15" viewBox="0 0 16 15"><rect x="0.7" y="0.7" width="14" height="13" rx="2.6" fill="none" stroke="#252423" stroke-width="1.3"/><path d="M5.2 0.7 L5.2 13.7 M10.2 0.7 L10.2 13.7 M0.7 5 L14.7 5 M0.7 9.4 L14.7 9.4" stroke="#252423" stroke-width="1.2" fill="none"/></svg>
<span style="left:1713.20px;top:352.53px;font-size:14.5px;line-height:14.5px;letter-spacing:-0.255px;color:#252423;">Company Sales</span>
<svg style="left:1670.5px;top:384.5px;" width="15" height="9" viewBox="0 0 15 9"><path d="M0.8 1 L7.3 7.6 L13.8 1" fill="none" stroke="#252423" stroke-width="1.2"/></svg>
<svg style="left:1690.3px;top:382.1px;" width="16" height="15" viewBox="0 0 16 15"><rect x="0.7" y="0.7" width="14" height="13" rx="2.6" fill="none" stroke="#252423" stroke-width="1.3"/><path d="M5.2 0.7 L5.2 13.7 M10.2 0.7 L10.2 13.7 M0.7 5 L14.7 5 M0.7 9.4 L14.7 9.4" stroke="#252423" stroke-width="1.2" fill="none"/></svg>
<svg style="left:1698px;top:388.7px;" width="15" height="15" viewBox="0 0 15 15"><circle cx="7.5" cy="7.5" r="7.4" fill="#117865"/><path d="M4.4 7.7 L6.6 9.9 L10.7 5.6" fill="none" stroke="#fff" stroke-width="1.5"/></svg>
<span style="left:1713.20px;top:382.53px;font-size:14.5px;line-height:14.5px;letter-spacing:-0.032px;color:#252423;">Countries</span>
<div style="left:1709px;top:412.0px;width:15px;height:15px;background:#fff;border:1px solid #8a8886;border-radius:2.5px;box-sizing:border-box;"></div>
<span style="left:1733.3999999999999px;top:410.2px;font-size:21.5px;line-height:21.5px;color:#252423;transform:scaleX(1.13);transform-origin:0 0;">&#931;</span>
<span style="left:1757.30px;top:412.53px;font-size:14.5px;line-height:14.5px;letter-spacing:-0.140px;color:#252423;">Area (sq km)</span>
<div style="left:1709px;top:442.0px;width:15px;height:15px;background:#117865;border-radius:2.5px;"></div>
<svg style="left:1709px;top:442.0px;" width="15" height="15" viewBox="0 0 15 15"><path d="M3.2 7.7 L6.2 10.7 L12 4.6" fill="none" stroke="#fff" stroke-width="1.6"/></svg>
<span style="left:1757.30px;top:442.53px;font-size:14.5px;line-height:14.5px;letter-spacing:-0.012px;color:#252423;">Country</span>
<div style="left:1709px;top:472.0px;width:15px;height:15px;background:#fff;border:1px solid #8a8886;border-radius:2.5px;box-sizing:border-box;"></div>
<svg style="left:1734.3px;top:470.8px;" width="15" height="17" viewBox="0 0 15 17"><rect x="0.7" y="0.7" width="13.6" height="15.6" rx="2.4" fill="none" stroke="#252423" stroke-width="1.3"/><rect x="3.3" y="3.2" width="8.4" height="3.2" rx="0.8" fill="none" stroke="#252423" stroke-width="1.1"/><rect x="3" y="8.8" width="1.8" height="1.8" rx="0.5" fill="#252423"/><rect x="3" y="12.100000000000001" width="1.8" height="1.8" rx="0.5" fill="#252423"/><rect x="6.6" y="8.8" width="1.8" height="1.8" rx="0.5" fill="#252423"/><rect x="6.6" y="12.100000000000001" width="1.8" height="1.8" rx="0.5" fill="#252423"/><rect x="10.2" y="8.8" width="1.8" height="1.8" rx="0.5" fill="#252423"/><rect x="10.2" y="12.100000000000001" width="1.8" height="1.8" rx="0.5" fill="#252423"/></svg>
<span style="left:1757.30px;top:472.53px;font-size:14.5px;line-height:14.5px;letter-spacing:0.196px;color:#252423;">Drillthrough ...</span>
<div style="left:1709px;top:502.0px;width:15px;height:15px;background:#117865;border-radius:2.5px;"></div>
<svg style="left:1709px;top:502.0px;" width="15" height="15" viewBox="0 0 15 15"><path d="M3.2 7.7 L6.2 10.7 L12 4.6" fill="none" stroke="#fff" stroke-width="1.6"/></svg>
<span style="left:1733.3999999999999px;top:500.2px;font-size:21.5px;line-height:21.5px;color:#252423;transform:scaleX(1.13);transform-origin:0 0;">&#931;</span>
<span style="left:1757.30px;top:502.53px;font-size:14.5px;line-height:14.5px;letter-spacing:-0.187px;color:#252423;">GDP (Billion U...</span>
<div style="left:1709px;top:532.0px;width:15px;height:15px;background:#fff;border:1px solid #8a8886;border-radius:2.5px;box-sizing:border-box;"></div>
<span style="left:1733.3999999999999px;top:530.2px;font-size:21.5px;line-height:21.5px;color:#252423;transform:scaleX(1.13);transform-origin:0 0;">&#931;</span>
<span style="left:1757.30px;top:532.53px;font-size:14.5px;line-height:14.5px;letter-spacing:-0.239px;color:#252423;">Literacy Rate (...</span>
<div style="left:1709px;top:562.0px;width:15px;height:15px;background:#fff;border:1px solid #8a8886;border-radius:2.5px;box-sizing:border-box;"></div>
<span style="left:1733.3999999999999px;top:560.2px;font-size:21.5px;line-height:21.5px;color:#252423;transform:scaleX(1.13);transform-origin:0 0;">&#931;</span>
<span style="left:1757.30px;top:562.53px;font-size:14.5px;line-height:14.5px;letter-spacing:0.143px;color:#252423;">Population (M...</span>
<div style="left:1709px;top:592.0px;width:15px;height:15px;background:#fff;border:1px solid #8a8886;border-radius:2.5px;box-sizing:border-box;"></div>
<svg style="left:1734.3px;top:590.8px;" width="15" height="17" viewBox="0 0 15 17"><rect x="0.7" y="0.7" width="13.6" height="15.6" rx="2.4" fill="none" stroke="#252423" stroke-width="1.3"/><rect x="3.3" y="3.2" width="8.4" height="3.2" rx="0.8" fill="none" stroke="#252423" stroke-width="1.1"/><rect x="3" y="8.8" width="1.8" height="1.8" rx="0.5" fill="#252423"/><rect x="3" y="12.100000000000001" width="1.8" height="1.8" rx="0.5" fill="#252423"/><rect x="6.6" y="8.8" width="1.8" height="1.8" rx="0.5" fill="#252423"/><rect x="6.6" y="12.100000000000001" width="1.8" height="1.8" rx="0.5" fill="#252423"/><rect x="10.2" y="8.8" width="1.8" height="1.8" rx="0.5" fill="#252423"/><rect x="10.2" y="12.100000000000001" width="1.8" height="1.8" rx="0.5" fill="#252423"/></svg>
<span style="left:1757.30px;top:592.53px;font-size:14.5px;line-height:14.5px;letter-spacing:-0.680px;color:#252423;">TREATAS Mea...</span>
<div style="left:1709px;top:622.0px;width:15px;height:15px;background:#117865;border-radius:2.5px;"></div>
<svg style="left:1709px;top:622.0px;" width="15" height="15" viewBox="0 0 15 15"><path d="M3.2 7.7 L6.2 10.7 L12 4.6" fill="none" stroke="#fff" stroke-width="1.6"/></svg>
<span style="left:1733.3999999999999px;top:620.2px;font-size:21.5px;line-height:21.5px;color:#252423;transform:scaleX(1.13);transform-origin:0 0;">&#931;</span>
<span style="left:1757.30px;top:622.53px;font-size:14.5px;line-height:14.5px;letter-spacing:-1.199px;color:#252423;">Year</span>
<svg style="left:1673px;top:652.0px;" width="9" height="15" viewBox="0 0 9 15"><path d="M1 0.8 L7.6 7.3 L1 13.8" fill="none" stroke="#252423" stroke-width="1.2"/></svg>
<svg style="left:1690.3px;top:652.1px;" width="16" height="15" viewBox="0 0 16 15"><rect x="0.7" y="0.7" width="14" height="13" rx="2.6" fill="none" stroke="#252423" stroke-width="1.3"/><path d="M5.2 0.7 L5.2 13.7 M10.2 0.7 L10.2 13.7 M0.7 5 L14.7 5 M0.7 9.4 L14.7 9.4" stroke="#252423" stroke-width="1.2" fill="none"/></svg>
<span style="left:1713.20px;top:652.53px;font-size:14.5px;line-height:14.5px;letter-spacing:0.131px;color:#252423;">Countrylist</span>
<svg style="left:1673px;top:682.0px;" width="9" height="15" viewBox="0 0 9 15"><path d="M1 0.8 L7.6 7.3 L1 13.8" fill="none" stroke="#252423" stroke-width="1.2"/></svg>
<svg style="left:1690.3px;top:682.1px;" width="16" height="15" viewBox="0 0 16 15"><rect x="0.7" y="0.7" width="14" height="13" rx="2.6" fill="none" stroke="#252423" stroke-width="1.3"/><path d="M5.2 0.7 L5.2 13.7 M10.2 0.7 L10.2 13.7 M0.7 5 L14.7 5 M0.7 9.4 L14.7 9.4" stroke="#252423" stroke-width="1.2" fill="none"/></svg>
<span style="left:1713.20px;top:682.53px;font-size:14.5px;line-height:14.5px;letter-spacing:0.207px;color:#252423;">df</span>
<svg style="left:1673px;top:712.0px;" width="9" height="15" viewBox="0 0 9 15"><path d="M1 0.8 L7.6 7.3 L1 13.8" fill="none" stroke="#252423" stroke-width="1.2"/></svg>
<svg style="left:1690.3px;top:712.1px;" width="19" height="18" viewBox="0 0 19 18"><path d="M8 13.7 L3.2 13.7 Q0.7 13.7 0.7 11.2 L0.7 3.2 Q0.7 0.7 3.2 0.7 L12.2 0.7 Q14.7 0.7 14.7 3.2 L14.7 5" fill="none" stroke="#252423" stroke-width="1.3"/><path d="M5.2 0.7 L5.2 13.7 M10.2 0.7 L10.2 5 M0.7 5 L14.7 5 M0.7 9.4 L8 9.4" stroke="#252423" stroke-width="1.2" fill="none"/><rect x="9.5" y="6.6" width="8" height="10.6" rx="1.4" fill="#252423"/><rect x="11" y="8.1" width="5" height="1.8" fill="#f3f2f1"/><rect x="11" y="11.2" width="1.3" height="1.3" fill="#f3f2f1"/><rect x="11" y="13.2" width="1.3" height="1.3" fill="#f3f2f1"/><rect x="11" y="15.2" width="1.3" height="1.3" fill="#f3f2f1"/><rect x="12.85" y="11.2" width="1.3" height="1.3" fill="#f3f2f1"/><rect x="12.85" y="13.2" width="1.3" height="1.3" fill="#f3f2f1"/><rect x="12.85" y="15.2" width="1.3" height="1.3" fill="#f3f2f1"/><rect x="14.7" y="11.2" width="1.3" height="1.3" fill="#f3f2f1"/><rect x="14.7" y="13.2" width="1.3" height="1.3" fill="#f3f2f1"/><rect x="14.7" y="15.2" width="1.3" height="1.3" fill="#f3f2f1"/></svg>
<span style="left:1713.20px;top:712.53px;font-size:14.5px;line-height:14.5px;letter-spacing:-0.112px;color:#252423;">EmployeeTable</span>
<svg style="left:1673px;top:742.0px;" width="9" height="15" viewBox="0 0 9 15"><path d="M1 0.8 L7.6 7.3 L1 13.8" fill="none" stroke="#252423" stroke-width="1.2"/></svg>
<svg style="left:1690.3px;top:742.1px;" width="19" height="18" viewBox="0 0 19 18"><path d="M8 13.7 L3.2 13.7 Q0.7 13.7 0.7 11.2 L0.7 3.2 Q0.7 0.7 3.2 0.7 L12.2 0.7 Q14.7 0.7 14.7 3.2 L14.7 5" fill="none" stroke="#252423" stroke-width="1.3"/><path d="M5.2 0.7 L5.2 13.7 M10.2 0.7 L10.2 5 M0.7 5 L14.7 5 M0.7 9.4 L8 9.4" stroke="#252423" stroke-width="1.2" fill="none"/><rect x="9.5" y="6.6" width="8" height="10.6" rx="1.4" fill="#252423"/><rect x="11" y="8.1" width="5" height="1.8" fill="#f3f2f1"/><rect x="11" y="11.2" width="1.3" height="1.3" fill="#f3f2f1"/><rect x="11" y="13.2" width="1.3" height="1.3" fill="#f3f2f1"/><rect x="11" y="15.2" width="1.3" height="1.3" fill="#f3f2f1"/><rect x="12.85" y="11.2" width="1.3" height="1.3" fill="#f3f2f1"/><rect x="12.85" y="13.2" width="1.3" height="1.3" fill="#f3f2f1"/><rect x="12.85" y="15.2" width="1.3" height="1.3" fill="#f3f2f1"/><rect x="14.7" y="11.2" width="1.3" height="1.3" fill="#f3f2f1"/><rect x="14.7" y="13.2" width="1.3" height="1.3" fill="#f3f2f1"/><rect x="14.7" y="15.2" width="1.3" height="1.3" fill="#f3f2f1"/></svg>
<span style="left:1713.20px;top:742.53px;font-size:14.5px;line-height:14.5px;letter-spacing:-0.072px;color:#252423;">First Numeric Param...</span>
<svg style="left:1673px;top:772.0px;" width="9" height="15" viewBox="0 0 9 15"><path d="M1 0.8 L7.6 7.3 L1 13.8" fill="none" stroke="#252423" stroke-width="1.2"/></svg>
<svg style="left:1690.3px;top:772.1px;" width="19" height="18" viewBox="0 0 19 18"><path d="M8 13.7 L3.2 13.7 Q0.7 13.7 0.7 11.2 L0.7 3.2 Q0.7 0.7 3.2 0.7 L12.2 0.7 Q14.7 0.7 14.7 3.2 L14.7 5" fill="none" stroke="#252423" stroke-width="1.3"/><path d="M5.2 0.7 L5.2 13.7 M10.2 0.7 L10.2 5 M0.7 5 L14.7 5 M0.7 9.4 L8 9.4" stroke="#252423" stroke-width="1.2" fill="none"/><rect x="9.5" y="6.6" width="8" height="10.6" rx="1.4" fill="#252423"/><rect x="11" y="8.1" width="5" height="1.8" fill="#f3f2f1"/><rect x="11" y="11.2" width="1.3" height="1.3" fill="#f3f2f1"/><rect x="11" y="13.2" width="1.3" height="1.3" fill="#f3f2f1"/><rect x="11" y="15.2" width="1.3" height="1.3" fill="#f3f2f1"/><rect x="12.85" y="11.2" width="1.3" height="1.3" fill="#f3f2f1"/><rect x="12.85" y="13.2" width="1.3" height="1.3" fill="#f3f2f1"/><rect x="12.85" y="15.2" width="1.3" height="1.3" fill="#f3f2f1"/><rect x="14.7" y="11.2" width="1.3" height="1.3" fill="#f3f2f1"/><rect x="14.7" y="13.2" width="1.3" height="1.3" fill="#f3f2f1"/><rect x="14.7" y="15.2" width="1.3" height="1.3" fill="#f3f2f1"/></svg>
<span style="left:1713.20px;top:772.53px;font-size:14.5px;line-height:14.5px;letter-spacing:-0.218px;color:#252423;">GenerateSeriesTable</span>
<svg style="left:1673px;top:802.0px;" width="9" height="15" viewBox="0 0 9 15"><path d="M1 0.8 L7.6 7.3 L1 13.8" fill="none" stroke="#252423" stroke-width="1.2"/></svg>
<svg style="left:1690.3px;top:802.1px;" width="16" height="15" viewBox="0 0 16 15"><rect x="0.7" y="0.7" width="14" height="13" rx="2.6" fill="none" stroke="#252423" stroke-width="1.3"/><path d="M5.2 0.7 L5.2 13.7 M10.2 0.7 L10.2 13.7 M0.7 5 L14.7 5 M0.7 9.4 L14.7 9.4" stroke="#252423" stroke-width="1.2" fill="none"/></svg>
<span style="left:1713.20px;top:802.53px;font-size:14.5px;line-height:14.5px;letter-spacing:0.068px;color:#252423;">If else query</span>
<svg style="left:1673px;top:832.0px;" width="9" height="15" viewBox="0 0 9 15"><path d="M1 0.8 L7.6 7.3 L1 13.8" fill="none" stroke="#252423" stroke-width="1.2"/></svg>
<svg style="left:1690.3px;top:832.1px;" width="16" height="15" viewBox="0 0 16 15"><rect x="0.7" y="0.7" width="14" height="13" rx="2.6" fill="none" stroke="#252423" stroke-width="1.3"/><path d="M5.2 0.7 L5.2 13.7 M10.2 0.7 L10.2 13.7 M0.7 5 L14.7 5 M0.7 9.4 L14.7 9.4" stroke="#252423" stroke-width="1.2" fill="none"/></svg>
<span style="left:1713.20px;top:832.53px;font-size:14.5px;line-height:14.5px;letter-spacing:0.185px;color:#252423;">Invoked Function</span>
<svg style="left:1673px;top:862.0px;" width="9" height="15" viewBox="0 0 9 15"><path d="M1 0.8 L7.6 7.3 L1 13.8" fill="none" stroke="#252423" stroke-width="1.2"/></svg>
<svg style="left:1690.3px;top:862.1px;" width="16" height="15" viewBox="0 0 16 15"><rect x="0.7" y="0.7" width="14" height="13" rx="2.6" fill="none" stroke="#252423" stroke-width="1.3"/><path d="M5.2 0.7 L5.2 13.7 M10.2 0.7 L10.2 13.7 M0.7 5 L14.7 5 M0.7 9.4 L14.7 9.4" stroke="#252423" stroke-width="1.2" fill="none"/></svg>
<span style="left:1713.20px;top:862.53px;font-size:14.5px;line-height:14.5px;letter-spacing:-0.044px;color:#252423;">List-AllTrue</span>
<svg style="left:1673px;top:892.0px;" width="9" height="15" viewBox="0 0 9 15"><path d="M1 0.8 L7.6 7.3 L1 13.8" fill="none" stroke="#252423" stroke-width="1.2"/></svg>
<svg style="left:1690.3px;top:892.1px;" width="16" height="15" viewBox="0 0 16 15"><rect x="0.7" y="0.7" width="14" height="13" rx="2.6" fill="none" stroke="#252423" stroke-width="1.3"/><path d="M5.2 0.7 L5.2 13.7 M10.2 0.7 L10.2 13.7 M0.7 5 L14.7 5 M0.7 9.4 L14.7 9.4" stroke="#252423" stroke-width="1.2" fill="none"/></svg>
<span style="left:1713.20px;top:892.53px;font-size:14.5px;line-height:14.5px;letter-spacing:0.066px;color:#252423;">Locations</span>
<svg style="left:1673px;top:922.0px;" width="9" height="15" viewBox="0 0 9 15"><path d="M1 0.8 L7.6 7.3 L1 13.8" fill="none" stroke="#252423" stroke-width="1.2"/></svg>
<svg style="left:1690.3px;top:922.1px;" width="19" height="18" viewBox="0 0 19 18"><path d="M8 13.7 L3.2 13.7 Q0.7 13.7 0.7 11.2 L0.7 3.2 Q0.7 0.7 3.2 0.7 L12.2 0.7 Q14.7 0.7 14.7 3.2 L14.7 5" fill="none" stroke="#252423" stroke-width="1.3"/><path d="M5.2 0.7 L5.2 13.7 M10.2 0.7 L10.2 5 M0.7 5 L14.7 5 M0.7 9.4 L8 9.4" stroke="#252423" stroke-width="1.2" fill="none"/><rect x="9.5" y="6.6" width="8" height="10.6" rx="1.4" fill="#252423"/><rect x="11" y="8.1" width="5" height="1.8" fill="#f3f2f1"/><rect x="11" y="11.2" width="1.3" height="1.3" fill="#f3f2f1"/><rect x="11" y="13.2" width="1.3" height="1.3" fill="#f3f2f1"/><rect x="11" y="15.2" width="1.3" height="1.3" fill="#f3f2f1"/><rect x="12.85" y="11.2" width="1.3" height="1.3" fill="#f3f2f1"/><rect x="12.85" y="13.2" width="1.3" height="1.3" fill="#f3f2f1"/><rect x="12.85" y="15.2" width="1.3" height="1.3" fill="#f3f2f1"/><rect x="14.7" y="11.2" width="1.3" height="1.3" fill="#f3f2f1"/><rect x="14.7" y="13.2" width="1.3" height="1.3" fill="#f3f2f1"/><rect x="14.7" y="15.2" width="1.3" height="1.3" fill="#f3f2f1"/></svg>
<span style="left:1713.20px;top:922.53px;font-size:14.5px;line-height:14.5px;letter-spacing:-0.028px;color:#252423;">Marks Parameter</span>
<div style="left:210.5px;top:902px;width:409px;height:44px;background:#fff;"></div>
<div style="left:210px;top:902px;width:1px;height:44px;background:#8a8886;"></div>
<div style="left:345px;top:902px;width:1px;height:44px;background:#8a8886;"></div>
<div style="left:473px;top:902px;width:1px;height:44px;background:#c8c6c4;"></div>
<div style="left:210.5px;top:941.3px;width:135px;height:4.7px;background:#117865;"></div>
<span style="left:236.00px;top:917.97px;font-size:14.8px;line-height:14.8px;letter-spacing:-0.257px;color:#252423;-webkit-text-stroke:0.5px currentColor;">Source Page</span>
<span style="left:380.50px;top:917.73px;font-size:14.5px;line-height:14.5px;letter-spacing:-0.169px;color:#252423;">Target Page</span>
<span style="left:498.75px;top:917.73px;font-size:14.5px;line-height:14.5px;letter-spacing:-0.132px;color:#252423;">Source Page-II</span>
<div style="left:619.5px;top:902px;width:49.3px;height:44px;background:#117865;"></div>
<svg style="left:636.5px;top:915px;" width="15" height="15" viewBox="0 0 15 15"><path d="M7.5 1 L7.5 14 M1 7.5 L14 7.5" stroke="#fff" stroke-width="3.2" fill="none"/></svg>
<svg style="left:359.5px;top:920.5px;" width="17" height="15" viewBox="0 0 17 15"><path d="M1.5 8.5 C3 4.8 5.5 3 8.5 3 C11.5 3 14 4.8 15.5 8.5" fill="none" stroke="#252423" stroke-width="1.1"/><circle cx="8.5" cy="8.2" r="2.3" fill="none" stroke="#252423" stroke-width="1.1"/><path d="M2 1.5 L15 14" stroke="#252423" stroke-width="1.1"/></svg>
<svg style="left:65.5px;top:910.5px;" width="24" height="18.5" viewBox="0 0 24 18.5"><rect x="0.9" y="0.9" width="22.2" height="13" rx="1" fill="none" stroke="#252423" stroke-width="1.5"/><path d="M12 14 L12 17 M7.5 17.4 L16.5 17.4" stroke="#252423" stroke-width="1.5"/></svg>
<div style="left:64px;top:936.7px;width:30px;height:3px;background:#117865;border-radius:1.5px;"></div>
<svg style="left:124.7px;top:907.5px;" width="17" height="25.5" viewBox="0 0 17 25.5"><rect x="0.9" y="0.9" width="15" height="23.5" rx="1.6" fill="none" stroke="#252423" stroke-width="1.5"/><path d="M7 20.6 L10 20.6" stroke="#252423" stroke-width="1.5"/></svg>
<svg style="left:167px;top:918px;" width="8" height="11" viewBox="0 0 8 11"><path d="M7 0.5 L0.8 5.5 L7 10.5 Z" fill="#c8c6c4"/></svg>
<svg style="left:195.5px;top:918px;" width="8" height="11" viewBox="0 0 8 11"><path d="M1 0.5 L7.2 5.5 L1 10.5 Z" fill="#c8c6c4"/></svg>
<div style="left:1654px;top:935.6px;width:224px;height:10.4px;background:#f3f2f1;"></div>
<div style="left:0px;top:946px;width:1918px;height:26px;background:#f3f2f1;border-top:1px solid #e1dfdd;box-sizing:border-box;"></div>
<span style="left:5.50px;top:955.54px;font-size:14.6px;line-height:14.6px;letter-spacing:-0.218px;color:#484644;">Page 1 of 3</span>
<div style="left:1656px;top:959.7px;width:4.5px;height:1.6px;background:#252423;"></div>
<div style="left:1666.7px;top:960px;width:124.5px;height:1px;background:#605e5c;"></div>
<div style="left:1727px;top:954.3px;width:5px;height:13.4px;background:#605e5c;"></div>
<svg style="left:1798px;top:955px;" width="11" height="11" viewBox="0 0 11 11"><path d="M5.5 1 L5.5 10 M1 5.5 L10 5.5" stroke="#252423" stroke-width="1.3"/></svg>
<span style="left:1825.50px;top:953.24px;font-size:14.6px;line-height:14.6px;letter-spacing:-0.780px;color:#484644;">100%</span>
<svg style="left:1876.5px;top:954px;" width="21" height="15.5" viewBox="0 0 21 15.5"><rect x="0.8" y="0.8" width="19.4" height="13.9" fill="none" stroke="#252423" stroke-width="1.3"/><path d="M4 6.2 L4 4 L7 4 M14 4 L17 4 L17 6.2 M17 9.3 L17 11.5 L14 11.5 M7 11.5 L4 11.5 L4 9.3" fill="none" stroke="#252423" stroke-width="1.3"/></svg>
<svg style="left:0px;top:0px;" width="1918" height="160" viewBox="0 0 1918 160"><rect x="21.8" y="56.6" width="25.3" height="29.4" fill="#fdf3e4" stroke="#f3cfa9" stroke-width="1.6"/><rect x="24.8" y="59.6" width="19.3" height="23.4" fill="#fefaf3"/><path d="M26.6 60.6 L26.6 55.6 L30.8 55.6 C30.8 50.6 38.2 50.6 38.2 55.6 L42.4 55.6 L42.4 60.6 Z" fill="#fafafa" stroke="#d0d0d0" stroke-width="1.3"/><rect x="38.1" y="67.1" width="16" height="20.8" fill="#fafafa" stroke="#c6c6c6" stroke-width="1.8"/><path d="M71.4 49.3 L78.3 62.5 M78.6 49.3 L71.7 62.5" stroke="#4a4846" stroke-width="1.25" fill="none"/><path d="M75 55 L71.9 64.4 M75 55 L78.1 64.4" stroke="#4a4846" stroke-width="1.1" fill="none"/><circle cx="71.2" cy="66.3" r="2" fill="#fff" stroke="#1b75bb" stroke-width="1.3"/><circle cx="78.8" cy="66.3" r="2" fill="#fff" stroke="#1b75bb" stroke-width="1.3"/><path d="M72.5 96 L65.9 96 L65.9 79.9 L72 79.9 L75.5 82.3" fill="none" stroke="#4a4846" stroke-width="1.4"/><path d="M73 82.8 L79.5 82.8 L84.3 87.6 L84.3 98.2 L73 98.2 Z" fill="#fff" stroke="#4a4846" stroke-width="1.4"/><path d="M79.5 82.8 L79.5 87.6 L84.3 87.6" fill="none" stroke="#4a4846" stroke-width="1.1"/><path d="M76 91.2 L81.6 91.2 M76 94 L81.6 94" stroke="#4a4846" stroke-width="1.1"/><path d="M66 118.4 L74.6 112.2 L80.3 119 L74 127.2 Z" fill="#fbe3b8" stroke="#e07a1a" stroke-width="1.3" stroke-linejoin="round"/><path d="M67.5 119.5 L76.5 123.5" stroke="#e07a1a" stroke-width="1.6"/><path d="M66 118.4 L74 127.2 L71 122 Z" fill="#e07a1a"/><path d="M74.2 112 L77.6 109.2 L83.2 116.2 L80.2 119.2 Z" fill="#fff" stroke="#4a4846" stroke-width="1.3" stroke-linejoin="round"/><path d="M78.7 110.5 L82.6 108 Q84.6 107.6 84.6 109.6 L82 114" fill="#fff" stroke="#4a4846" stroke-width="1.3" stroke-linejoin="round"/><path d="M222.8 56.5 L222.8 81.5 C222.8 84 228 85.8 235 85.8 M248 56.5 L248 68" fill="none" stroke="#4a4846" stroke-width="1.5"/><ellipse cx="235.4" cy="56.4" rx="12.6" ry="4.7" fill="none" stroke="#4a4846" stroke-width="1.5"/><rect x="237" y="69.8" width="18" height="18.4" fill="#fff"/><rect x="237" y="69.8" width="18" height="3.6" fill="#c8c6c4"/><path d="M243.0 73.39999999999999 L243.0 88.19999999999999" stroke="#8a8886" stroke-width="1.3"/><path d="M249.0 73.39999999999999 L249.0 88.19999999999999" stroke="#8a8886" stroke-width="1.3"/><path d="M237 78.3 L255 78.3" stroke="#8a8886" stroke-width="1.3"/><path d="M237 83.3 L255 83.3" stroke="#8a8886" stroke-width="1.3"/><path d="M237 73.39999999999999 L255 73.39999999999999" stroke="#4a4846" stroke-width="1.5"/><rect x="237" y="69.8" width="18" height="18.4" fill="none" stroke="#4a4846" stroke-width="1.5"/><path d="M283.6 52 L300.70000000000005 52 L309.20000000000005 60.5 L309.20000000000005 85.8 L283.6 85.8 Z" fill="#fff" stroke="#7a7876" stroke-width="1.5" stroke-linejoin="miter"/><path d="M300.70000000000005 52 L300.70000000000005 60.5 L309.20000000000005 60.5" fill="#e4e4e4" stroke="#7a7876" stroke-width="1.2000000000000002"/><rect x="298.2" y="71.2" width="17.6" height="17.6" rx="1.6" fill="#107c41"/><text x="307" y="85.2" font-family="Liberation Sans,sans-serif" font-size="14.5" font-weight="700" fill="#fff" text-anchor="middle">X</text><circle cx="366" cy="69.6" r="15.6" fill="none" stroke="#4a4846" stroke-width="1.5"/><path d="M361 85 C352 83 348 75 348.6 68.5 C349 61 354 55.5 360 54 C362.5 51.2 368.5 50.2 373.5 53.8 C375.5 55.2 377 57 377.6 58.5 C373 55.6 366.5 55.8 361.8 58.8 C356 63 354.5 73 358 80 Z" fill="#4a4846"/><path d="M360.5 59.5 C362 67 366.5 73 370.2 75.2 M357.5 79 C365 79.6 371 77.2 374 73.5 C376.5 70.5 379.5 70.6 381.4 72.6" fill="none" stroke="#4a4846" stroke-width="1.4"/><path d="M410.5 52 L427.6 52 L436.1 60.5 L436.1 85.8 L410.5 85.8 Z" fill="#fff" stroke="#4a4846" stroke-width="1.7" stroke-linejoin="miter"/><path d="M427.6 52 L427.6 60.5 L436.1 60.5" fill="#e4e4e4" stroke="#4a4846" stroke-width="1.36"/><path d="M428 71 L428 85.3 C428 87 431.5 88.2 435.7 88.2 C439.9 88.2 443.3 87 443.3 85.3 L443.3 71" fill="#fff" stroke="#e07a1a" stroke-width="1.4"/><ellipse cx="435.65" cy="70.8" rx="7.65" ry="3.3" fill="#fff" stroke="#e07a1a" stroke-width="1.4"/><rect x="457.2" y="52" width="33.8" height="33.8" fill="#fff"/><rect x="457.2" y="52" width="33.8" height="5.6" fill="#c8c6c4"/><path d="M468.5 57.6 L468.5 85.8" stroke="#8a8886" stroke-width="1.3"/><path d="M479.7 57.6 L479.7 85.8" stroke="#8a8886" stroke-width="1.3"/><path d="M457.2 67.0 L491.0 67.0" stroke="#8a8886" stroke-width="1.3"/><path d="M457.2 76.4 L491.0 76.4" stroke="#8a8886" stroke-width="1.3"/><path d="M457.2 57.6 L491.0 57.6" stroke="#4a4846" stroke-width="1.5"/><rect x="457.2" y="52" width="33.8" height="33.8" fill="none" stroke="#4a4846" stroke-width="2"/><rect x="453" y="48" width="13" height="13.6" fill="#fafafa"/><path d="M463.2 49.2 L463.2 68 M454 58.2 L473 58.2" stroke="#3a9a4a" stroke-width="1.8" fill="none"/><path d="M531 56 C538 54.5 543 56.4 545.4 58.2 C547 55.8 550.2 55.4 551.3 58.6 C552.6 62.4 552 68.4 549.4 73.2 C546.4 79 541 82.6 535.4 82.3 C531.6 82.1 529.5 80.5 528.3 78.8 C526 81.6 521.4 82.600 518.5 79.400 C515.5 76 515.2 68.400 518.2 63.200 C521 58.400 526 56.600 531 56 Z" fill="none" stroke="#4a4846" stroke-width="1.35"/><path d="M528.3 78.8 C524.3 74 524.7 66 529.5 62.5 C534.2 59.200 540.8 60.900 542.5 66.500 C544.200 72.200 540.600 77.400 535.300 77.800 C531 78.100 528 74.700 528.500 70.600 C529 66.700 532.600 64.500 535.700 65.500 C538.500 66.400 539.600 69.600 538.200 71.900 C536.900 74 533.900 74.200 532.800 72.400" fill="none" stroke="#4a4846" stroke-width="1.35" stroke-linecap="round"/><path d="M545.4 58.2 C548 62.500 548.200 69 545.200 73.600 C543 77 540 78.800 536.500 79.200" fill="none" stroke="#4a4846" stroke-width="1.1"/><path d="M590.5 52 L607.6 52 L616.1 60.5 L616.1 85.8 L590.5 85.8 Z" fill="#fff" stroke="#4a4846" stroke-width="1.7" stroke-linejoin="miter"/><path d="M607.6 52 L607.6 60.5 L616.1 60.5" fill="#e4e4e4" stroke="#4a4846" stroke-width="1.36"/><circle cx="614.4" cy="79.4" r="8.6" fill="#fff" stroke="#1b75bb" stroke-width="1.7"/><path d="M614.8 74 L614.8 79.6 L619 79.6" fill="none" stroke="#4a4846" stroke-width="1.3"/><rect x="677.8" y="52" width="34.2" height="33.8" fill="#fff"/><rect x="677.8" y="52" width="34.2" height="5.6" fill="#c8c6c4"/><path d="M689.2 57.6 L689.2 85.8" stroke="#8a8886" stroke-width="1.3"/><path d="M700.6 57.6 L700.6 85.8" stroke="#8a8886" stroke-width="1.3"/><path d="M677.8 67.0 L712.0 67.0" stroke="#8a8886" stroke-width="1.3"/><path d="M677.8 76.4 L712.0 76.4" stroke="#8a8886" stroke-width="1.3"/><path d="M677.8 57.6 L712.0 57.6" stroke="#4a4846" stroke-width="1.5"/><rect x="677.8" y="52" width="34.2" height="33.8" fill="none" stroke="#4a4846" stroke-width="2"/><path d="M686 91 L692 78 L712 58 L717 63 L697 84 Z" fill="#fafafa"/><path d="M689.60 88.20 L696.54 85.97 L713.95 68.70 Q716.08 66.59 713.76 64.25 Q711.43 61.90 709.30 64.02 L691.89 81.28 Z" fill="#fff" stroke="#1b75bb" stroke-width="1.5" stroke-linejoin="round"/><path d="M689.60 88.20 L696.54 85.97 L691.89 81.28 Z" fill="#86bdeb" stroke="#1b75bb" stroke-width="1.2" stroke-linejoin="round"/><path d="M712.53 70.11 L707.88 65.43" stroke="#1b75bb" stroke-width="1.2"/><path d="M743.6 52 L760.7 52 L769.2 60.5 L769.2 85.8 L743.6 85.8 Z" fill="#fff" stroke="#4a4846" stroke-width="1.7" stroke-linejoin="miter"/><path d="M760.7 52 L760.7 60.5 L769.2 60.5" fill="#e4e4e4" stroke="#4a4846" stroke-width="1.36"/><circle cx="767.5" cy="79.6" r="11" fill="#fafafa"/><path d="M759.6 77.5 C760.6 73.2 764 71 767.6 71 C771 71 774 73 775.4 76" fill="none" stroke="#3a9a4a" stroke-width="1.8"/><path d="M776.2 70.6 L776.2 76.6 L770.2 76.6" fill="none" stroke="#3a9a4a" stroke-width="1.8"/><path d="M775.6 81.5 C774.6 85.8 771.2 88 767.6 88 C764.2 88 761.2 86 759.8 83" fill="none" stroke="#3a9a4a" stroke-width="1.8"/><path d="M759 88.4 L759 82.4 L765 82.4" fill="none" stroke="#3a9a4a" stroke-width="1.8"/><rect x="835" y="58" width="9.4" height="28.2" fill="#c8c6c4" stroke="#a8a6a4" stroke-width="1.2"/><rect x="813.8" y="66" width="10.6" height="20.2" fill="#86bdeb" stroke="#1b75bb" stroke-width="1.5"/><rect x="824.6" y="52.2" width="10" height="34" fill="#fff" stroke="#4a4846" stroke-width="1.6"/><rect x="837.6" y="68.5" width="5" height="21" fill="#fafafa"/><rect x="830" y="77" width="20" height="5" fill="#fafafa" opacity="0"/><path d="M840 70 L840 89 M830.6 79.4 L849.6 79.4" stroke="#3a9a4a" stroke-width="1.8" fill="none"/><rect x="1188.8" y="54.6" width="36.4" height="28.8" fill="none" stroke="#4a4846" stroke-width="1.3"/><rect x="1186.7" y="52.5" width="4.2" height="4.2" fill="#2b88d8"/><rect x="1223.1000000000001" y="52.5" width="4.2" height="4.2" fill="#2b88d8"/><rect x="1186.7" y="81.30000000000001" width="4.2" height="4.2" fill="#2b88d8"/><rect x="1223.1000000000001" y="81.30000000000001" width="4.2" height="4.2" fill="#2b88d8"/><text x="1207" y="77.8" font-family="Liberation Sans,sans-serif" font-size="23.5" fill="#2b88d8" text-anchor="middle">A</text><rect x="1267.2" y="58.4" width="10.2" height="27.4" fill="#fff" stroke="#4a4846" stroke-width="1.5"/><rect x="1247.2" y="65.8" width="10" height="20" fill="#fff" stroke="#4a4846" stroke-width="1.5"/><rect x="1257.2" y="52.2" width="10" height="33.6" fill="#fff" stroke="#4a4846" stroke-width="1.5"/><path d="M1254 91 L1260 78 L1280 58 L1285 63 L1265 84 Z" fill="#fafafa"/><path d="M1257.60 88.20 L1264.54 85.97 L1282.15 68.50 Q1284.28 66.39 1281.96 64.05 Q1279.63 61.70 1277.50 63.82 L1259.89 81.28 Z" fill="#fff" stroke="#1b75bb" stroke-width="1.5" stroke-linejoin="round"/><path d="M1257.60 88.20 L1264.54 85.97 L1259.89 81.28 Z" fill="#86bdeb" stroke="#1b75bb" stroke-width="1.2" stroke-linejoin="round"/><path d="M1280.73 69.91 L1276.08 65.23" stroke="#1b75bb" stroke-width="1.2"/><rect x="1365.4" y="57.6" width="10.2" height="22" fill="#86bdeb"/><path d="M1365.4 58.2 L1375.6 58.2" stroke="#1b75bb" stroke-width="1.6"/><rect x="1345" y="66" width="10.2" height="20" fill="#c8c6c4" stroke="#7a7876" stroke-width="1.4"/><rect x="1355.2" y="52.2" width="10" height="33.8" fill="#fff" stroke="#4a4846" stroke-width="1.5"/><ellipse cx="1371" cy="77" rx="9" ry="10.5" fill="#fafafa"/><text x="1361.2" y="82.6" font-family="Liberation Serif,serif" font-style="italic" font-size="23" fill="#252423">fx</text><rect x="1423.7" y="52" width="23.6" height="34" fill="#fff" stroke="#4a4846" stroke-width="2"/><rect x="1427.9" y="55.6" width="15.6" height="5.4" fill="#86bdeb" stroke="#1b75bb" stroke-width="1.2"/><rect x="1427.3000000000002" y="64.0" width="3.6" height="3.6" fill="#3b3a39"/><rect x="1427.3000000000002" y="71.5" width="3.6" height="3.6" fill="#3b3a39"/><rect x="1427.3000000000002" y="79.10000000000001" width="3.6" height="3.6" fill="#3b3a39"/><rect x="1433.7" y="64.0" width="3.6" height="3.6" fill="#3b3a39"/><rect x="1433.7" y="71.5" width="3.6" height="3.6" fill="#3b3a39"/><rect x="1433.7" y="79.10000000000001" width="3.6" height="3.6" fill="#3b3a39"/><rect x="1440.1000000000001" y="64.0" width="3.6" height="3.6" fill="#3b3a39"/><rect x="1440.1000000000001" y="71.5" width="3.6" height="3.6" fill="#3b3a39"/><rect x="1440.1000000000001" y="79.10000000000001" width="3.6" height="3.6" fill="#3b3a39"/><rect x="1484.6" y="52" width="23.6" height="34" fill="#fff" stroke="#4a4846" stroke-width="2"/><rect x="1488.8" y="55.6" width="15.6" height="5.4" fill="#c8c6c4" stroke="#979593" stroke-width="1.2"/><rect x="1488.2" y="64.0" width="3.6" height="3.6" fill="#3b3a39"/><rect x="1488.2" y="71.5" width="3.6" height="3.6" fill="#3b3a39"/><rect x="1488.2" y="79.10000000000001" width="3.6" height="3.6" fill="#3b3a39"/><rect x="1494.6" y="64.0" width="3.6" height="3.6" fill="#3b3a39"/><rect x="1494.6" y="71.5" width="3.6" height="3.6" fill="#3b3a39"/><rect x="1494.6" y="79.10000000000001" width="3.6" height="3.6" fill="#3b3a39"/><rect x="1501.0" y="64.0" width="3.6" height="3.6" fill="#3b3a39"/><rect x="1501.0" y="71.5" width="3.6" height="3.6" fill="#3b3a39"/><rect x="1501.0" y="79.10000000000001" width="3.6" height="3.6" fill="#3b3a39"/><path d="M1483 48 L1494 48 L1489.5 57 L1494.5 57 L1478 76 L1482 63.5 L1476 63.5 Z" fill="#fafafa"/><path d="M1484.4 49.6 L1492.6 49.6 L1487.2 58.2 L1492.4 58.2 L1477.8 73.6 L1483.8 62.6 L1477.8 62.6 Z" fill="#fbd982" stroke="#e07a00" stroke-width="1.1" stroke-linejoin="miter"/><path d="M1589 52.2 L1570.6 52.2 L1570.6 86.2 L1596 86.2 L1596 70" fill="none" stroke="#a9d0e8" stroke-width="1.5"/><path d="M1575.5 66.4 L1580.6 61.8 L1592 73.4 L1586.8 78.4 Z M1578.6 66.5 L1580.6 64.8 L1588.8 73.3 L1586.8 75" fill="none" stroke="#a9d0e8" stroke-width="1.2"/><path d="M1585.6 56.4 L1589.6 52.4 L1601.6 64.4 L1597.6 68.4 Z" fill="#fafafa" stroke="#a9d0e8" stroke-width="1.4"/><path d="M1588.4 59.2 L1598.6 69.4" stroke="#a9d0e8" stroke-width="3"/><path d="M1592.6 53.2 L1597.2 49 L1603.4 55.4 L1599 59.6" fill="#fafafa" stroke="#a9d0e8" stroke-width="1.4"/><path d="M1678 66.5 L1678 55.4 Q1678 52.1 1674.7 52.1 L1669.3 52.1 Q1666 52.1 1666 55.4 L1666 62" fill="none" stroke="#4a4846" stroke-width="1.8"/><path d="M1671.6 80 L1671.6 65.4 Q1671.6 62.1 1668.3 62.1 L1662.7 62.1 Q1659.4 62.1 1659.4 65.4 L1659.4 72" fill="none" stroke="#4a4846" stroke-width="1.8"/><path d="M1675.4 85.7 L1656.3 85.7 Q1653 85.7 1653 82.4 L1653 75.4 Q1653 72.1 1656.3 72.1 L1661.8 72.1 Q1665.1 72.1 1665.1 75.4 L1665.1 85.7" fill="none" stroke="#4a4846" stroke-width="1.8"/><path d="M1677.9 88.8 L1677.9 70 M1670.2 77.6 L1677.9 69.8 L1685.6 77.6" fill="none" stroke="#1b6fa8" stroke-width="1.9"/><path d="M1757.5 57 L1745.6 57 L1745.6 67.2 L1768.6 67.2" fill="none" stroke="#4a4846" stroke-width="1.5"/><rect x="1745.6" y="70.8" width="26.4" height="10.4" fill="none" stroke="#4a4846" stroke-width="1.5"/><rect x="1748.6" y="60" width="4.3" height="4.3" fill="#3b3a39"/><rect x="1765" y="73.6" width="4.3" height="4.3" fill="#3b3a39"/><path d="M1765.3 51.199999999999996 Q1767.036 55.664 1771.5 57.4 Q1767.036 59.135999999999996 1765.3 63.6 Q1763.5639999999999 59.135999999999996 1759.1 57.4 Q1763.5639999999999 55.664 1765.3 51.199999999999996 Z" fill="#fafafa" stroke="#2b88d8" stroke-width="1.3" stroke-linejoin="round"/><path d="M1772.7 61.6 Q1773.708 64.19200000000001 1776.3 65.2 Q1773.708 66.208 1772.7 68.8 Q1771.692 66.208 1769.1000000000001 65.2 Q1771.692 64.19200000000001 1772.7 61.6 Z" fill="#fafafa" stroke="#2b88d8" stroke-width="1.2" stroke-linejoin="round"/><defs><linearGradient id="cpA" x1="0" y1="0" x2="0" y2="1"><stop offset="0" stop-color="#1b8fe6"/><stop offset=".45" stop-color="#3fc0b0"/><stop offset=".75" stop-color="#b5d334"/><stop offset="1" stop-color="#f2b02c"/></linearGradient><linearGradient id="cpB" x1="0" y1="0" x2="0" y2="1"><stop offset="0" stop-color="#a45cf0"/><stop offset=".45" stop-color="#e65a9c"/><stop offset="1" stop-color="#fb9a4b"/></linearGradient><linearGradient id="cpC" x1="0" y1="0" x2="1" y2="0"><stop offset="0" stop-color="#2a9be8"/><stop offset="1" stop-color="#1f49c8"/></linearGradient><linearGradient id="cpD" x1="0" y1="0" x2="1" y2="0"><stop offset="0" stop-color="#e8502e"/><stop offset="1" stop-color="#fb9a4b"/></linearGradient></defs><path d="M1822.5 53 L1836 53 Q1840.5 53 1839 57.5 L1831.5 77 Q1830 81 1825.8 81 L1816.5 81 Q1811.3 81 1812.4 76 L1816.2 58.5 Q1817.3 53 1822.500 53 Z" fill="url(#cpA)"/><path d="M1829.5 53 L1836.500 53 Q1840 53 1841.5 56.6 L1843.5 61.8 L1834.5 61.8 Z" fill="url(#cpC)"/><path d="M1835.8 60.6 L1844.5 60.6 Q1850.2 60.6 1849.2 66 L1846 80 Q1844.800 85.2 1839.5 85.2 L1826.5 85.2 Q1822 85.2 1823.5 80.8 L1830.500 64.4 Q1832 60.600 1835.800 60.600 Z" fill="url(#cpB)"/><path d="M1821.5 77.5 L1830.5 77.5 L1828.500 82 Q1827 85.2 1825.500 85.2 Q1823 85 1822.2 81.500 Z" fill="url(#cpD)"/><path d="M1836 62 L1832.400 62 L1826.6 77.6 L1830.200 77.600 Z" fill="#fff" opacity=".95"/><path d="M1823.5 15.8 L1820.6 15.8 Q1818.3 15.8 1818.3 18.1 L1818.3 24.4 Q1818.3 26.7 1820.600 26.700 L1832 26.7 Q1834.3 26.7 1834.3 24.400 L1834.300 23.5" fill="none" stroke="#fff" stroke-width="1.4" stroke-linecap="round"/><path d="M1822.6 23.4 C1823.2 18.4 1826 15.8 1829.8 15.6 L1829.8 11.6 L1836.2 17.3 L1829.8 22.8 L1829.8 19 C1826.8 19 1824.500 20.400 1822.600 23.400 Z" fill="none" stroke="#fff" stroke-width="1.4" stroke-linejoin="round"/><path d="M1889.8 16.3 L1895.6 22 L1901.4 16.3" fill="none" stroke="#fff" stroke-width="1.5" stroke-linecap="round" stroke-linejoin="round"/></svg>
<svg style="left:868.00px;top:62.10px;" width="20.00" height="20.00" viewBox="0 0 20 20"><rect x="0.7" y="2.4" width="4.50" height="5.80" fill="#fff" stroke="#3b3a39" stroke-width="1.2"/><rect x="5.2" y="2.4" width="7.40" height="5.80" fill="#86bdeb" stroke="#106ebe" stroke-width="1.4"/><rect x="0.7" y="11.4" width="7.70" height="5.80" fill="#fff" stroke="#3b3a39" stroke-width="1.2"/><rect x="8.4" y="11.4" width="9.20" height="5.80" fill="#c8c6c4" stroke="#7a7876" stroke-width="1.4"/><path d="M0.7 0 L0.7 19.3 L20 19.3" fill="none" stroke="#3b3a39" stroke-width="1.4" /></svg>
<svg style="left:900.60px;top:62.10px;" width="20.00" height="20.00" viewBox="0 0 20 20"><rect x="2.8" y="14.4" width="5.80" height="4.90" fill="#fff" stroke="#3b3a39" stroke-width="1.2"/><rect x="2.8" y="6.4" width="5.80" height="8.00" fill="#86bdeb" stroke="#106ebe" stroke-width="1.5"/><rect x="11.2" y="11.2" width="5.80" height="8.10" fill="#fff" stroke="#3b3a39" stroke-width="1.2"/><rect x="11.2" y="2.6" width="5.80" height="8.60" fill="#c8c6c4" stroke="#7a7876" stroke-width="1.4"/><path d="M0.7 0 L0.7 19.3 L20 19.3" fill="none" stroke="#3b3a39" stroke-width="1.4" /></svg>
<svg style="left:933.20px;top:62.10px;" width="20.00" height="20.00" viewBox="0 0 20 20"><rect x="0.7" y="2.6" width="18.30" height="5.60" fill="#86bdeb" stroke="#106ebe" stroke-width="1.4"/><rect x="0.7" y="11" width="12.50" height="5.40" fill="#fff" stroke="#3b3a39" stroke-width="1.4"/><path d="M0.7 0 L0.7 19.3 L20 19.3" fill="none" stroke="#3b3a39" stroke-width="1.4" /></svg>
<svg style="left:965.80px;top:62.10px;" width="20.00" height="20.00" viewBox="0 0 20 20"><rect x="3.8" y="1.4" width="5.80" height="17.90" fill="#86bdeb" stroke="#106ebe" stroke-width="1.4"/><rect x="11.6" y="6.6" width="5.80" height="12.70" fill="#fff" stroke="#3b3a39" stroke-width="1.4"/><path d="M0.7 0 L0.7 19.3 L20 19.3" fill="none" stroke="#3b3a39" stroke-width="1.4" /></svg>
<svg style="left:998.40px;top:62.10px;" width="20.00" height="20.00" viewBox="0 0 20 20"><rect x="3.2" y="14.2" width="4.60" height="5.10" fill="#fff" stroke="#3b3a39" stroke-width="1"/><rect x="3.2" y="2.8" width="4.60" height="11.40" fill="#86bdeb" stroke="#106ebe" stroke-width="1.3"/><rect x="11.4" y="8" width="4.40" height="11.30" fill="#fff" stroke="#3b3a39" stroke-width="1"/><rect x="11.4" y="2.8" width="4.40" height="5.20" fill="#c8c6c4" stroke="#7a7876" stroke-width="1.2"/><path d="M0.7 0.6 L0.7 19.3 L18.6 19.3" fill="none" stroke="#3b3a39" stroke-width="1.1" /><path d="M1 17 L6.6 9.8 L11.6 14.8 L18.4 7.6" fill="none" stroke="#3b3a39" stroke-width="1.3" /></svg>
<svg style="left:1031.00px;top:62.10px;" width="20.00" height="20.00" viewBox="0 0 20 20"><rect x="2.4" y="7.4" width="5.60" height="11.90" fill="#86bdeb" stroke="#106ebe" stroke-width="1.3"/><rect x="8" y="1.4" width="5.60" height="17.90" fill="#fff" stroke="#3b3a39" stroke-width="1.2"/><rect x="13.6" y="5.4" width="5.20" height="13.90" fill="#c8c6c4" stroke="#7a7876" stroke-width="1.2"/><path d="M0.7 0 L0.7 19.3 L20 19.3" fill="none" stroke="#3b3a39" stroke-width="1.3" /><path d="M1 18 L7.2 9.2 L12.8 15 L19.8 9.4" fill="none" stroke="#3b3a39" stroke-width="1.3" /></svg>
<svg style="left:1063.60px;top:62.10px;" width="20.00" height="20.00" viewBox="0 0 20 20"><path d="M1 17 L13.2 4.2 L19.2 10.2" fill="none" stroke="#106ebe" stroke-width="1.3" /><path d="M1 11.6 L6.6 5.2 L12.2 10 L19.2 4.8" fill="none" stroke="#3b3a39" stroke-width="1.3" /><path d="M0.7 0 L0.7 19.3 L20 19.3" fill="none" stroke="#3b3a39" stroke-width="1.4" /></svg>
<svg style="left:1096.20px;top:62.10px;" width="20.00" height="20.00" viewBox="0 0 20 20"><path d="M12 9.4 L15.6 0.8 L19.6 10.4 L19.6 19.4 L12 19.4 Z" fill="#c8c6c4" stroke="#7a7876" stroke-width="1.0" /><path d="M0.5 19.4 L0.5 11.2 L6.6 1.6 L12.4 9.8 L12.4 19.4 Z" fill="#f6f6f6" stroke="#3b3a39" stroke-width="1.2" /><path d="M0.5 19.5 L0.5 12.4 L5.6 17.2 L11.8 8.2 L19.6 19.5 Z" fill="#86bdeb" stroke="#106ebe" stroke-width="1.3" /></svg>
<svg style="left:1128.80px;top:62.10px;" width="20.00" height="20.00" viewBox="0 0 20 20"><rect x="0.6" y="0.6" width="18.80" height="18.80" fill="#fff" stroke="#3b3a39" stroke-width="1.3"/><rect x="1.2" y="1.2" width="17.6" height="3" fill="#c8c6c4"/><rect x="3.6" y="6.6" width="3.40" height="3.00" fill="#c8c6c4" stroke="#7a7876" stroke-width="0.9"/><rect x="3.6" y="11.8" width="3.40" height="3.00" fill="#c8c6c4" stroke="#7a7876" stroke-width="0.9"/><rect x="9" y="8.4" width="12" height="12.6" fill="#fff"/><path d="M9.2 9 L20.6 9 L16.6 13.6 L16.6 20 L13.200 20 L13.200 13.600 Z" fill="#fff" stroke="#3b3a39" stroke-width="1.3" stroke-linejoin="miter"/></svg>
<svg style="left:868.00px;top:98.90px;" width="20.00" height="20.00" viewBox="0 0 20 20"><circle cx="10" cy="10" r="9.5" fill="#f6f6f6" stroke="#3b3a39" stroke-width="1.2"/><path d="M9.4 0.6 A9.5 9.5 0 0 1 16.4 17.2 L9.4 10.6 Z" fill="#86bdeb" stroke="#106ebe" stroke-width="1.3" stroke-linejoin="round"/></svg>
<svg style="left:900.60px;top:98.90px;" width="20.00" height="20.00" viewBox="0 0 20 20"><path d="M15.98 17.12 A9.3 9.3 0 1 1 10.00 0.70 L10.00 5.60 A4.4 4.4 0 1 0 12.83 13.37 Z" fill="#fff" stroke="#3b3a39" stroke-width="1.1" /><path d="M10.00 0.70 A9.3 9.3 0 0 1 15.98 17.12 L12.83 13.37 A4.4 4.4 0 0 0 10.00 5.60 Z" fill="#86bdeb" stroke="#106ebe" stroke-width="1.3" /></svg>
<svg style="left:933.20px;top:98.90px;" width="20.00" height="20.00" viewBox="0 0 20 20"><rect x="0.6" y="0.6" width="9.40" height="9.40" fill="#86bdeb" stroke="#106ebe" stroke-width="1.4"/><rect x="0.6" y="10" width="9.40" height="9.40" fill="#86bdeb" stroke="#106ebe" stroke-width="1.4"/><rect x="10" y="0.6" width="9.40" height="6.00" fill="#fff" stroke="#3b3a39" stroke-width="1.2"/><rect x="10" y="6.6" width="4.60" height="12.80" fill="#fff" stroke="#3b3a39" stroke-width="1.2"/><rect x="14.6" y="6.6" width="4.80" height="6.40" fill="#fff" stroke="#3b3a39" stroke-width="1.2"/><rect x="14.6" y="13" width="4.80" height="6.40" fill="#fff" stroke="#3b3a39" stroke-width="1.2"/></svg>
<svg style="left:965.80px;top:98.90px;" width="20.00" height="20.00" viewBox="0 0 20 20"><circle cx="10.6" cy="8.6" r="6.4" fill="#fff" stroke="#3b3a39" stroke-width="1.5"/><path d="M8.4 5 C9.5 3.4 11 3.2 12.4 3.8 L13 5.8 L11.2 6.4 L10.6 8.4 L8.6 8.8 L7.6 7 Z M12.8 7.2 L15 6.6 L15.8 9.4 L14 10.6 Z M9 11 L12.6 10.8 L12.4 13.6 L10 14 Z" fill="#2e9a47" stroke="none" stroke-width="0" /><path d="M9 0.8 C3 2.600 0.6 9.2 4.2 14 C8 18.6 15.5 17.6 18 13" fill="none" stroke="#3b3a39" stroke-width="1.3" /><path d="M10.4 17 L10.4 19.3 M3.6 19.3 L17.2 19.3" fill="none" stroke="#3b3a39" stroke-width="1.3" /></svg>
<svg style="left:998.40px;top:98.90px;" width="20.00" height="20.00" viewBox="0 0 20 20"><path d="M0.20 13.20 A9.8 9.8 0 0 1 5.86 4.32 L7.72 8.31 A5.4 5.4 0 0 0 4.60 13.20 Z" fill="#f6f6f6" stroke="#3b3a39" stroke-width="1.2" /><path d="M5.86 4.32 A9.8 9.8 0 0 1 19.80 13.20 L15.40 13.20 A5.4 5.4 0 0 0 7.72 8.31 Z" fill="#86bdeb" stroke="#106ebe" stroke-width="1.3" /><path d="M9.2 13.4 L14.2 8.6" fill="none" stroke="#3b3a39" stroke-width="1.5" /><circle cx="9.6" cy="13" r="1.2" fill="#3b3a39"/></svg>
<svg style="left:1031.00px;top:98.90px;" width="20.00" height="20.00" viewBox="0 0 20 20"><rect x="0.7" y="2.8" width="18.60" height="14.40" fill="#f6f6f6" stroke="#3b3a39" stroke-width="1.4"/><text x="10" y="12.6" font-family="Liberation Sans,sans-serif" font-size="9.6" fill="#2b88d8" text-anchor="middle" >123</text><path d="M2.6 14.800 L17.4 14.800" fill="none" stroke="#a19f9d" stroke-width="1" /></svg>
<svg style="left:1063.60px;top:98.90px;" width="20.00" height="20.00" viewBox="0 0 20 20"><rect x="0.6" y="0.6" width="18.80" height="18.80" fill="#f6f6f6" stroke="#3b3a39" stroke-width="1.3"/><path d="M4.3 2.6 L4.3 17.4" fill="none" stroke="#7a7876" stroke-width="0.9" /><path d="M6.4 5.2 L15.8 5.2 M6.4 12.4 L15.8 12.4" fill="none" stroke="#0f5fb5" stroke-width="1.9" /><path d="M6.4 8.2 L10.8 8.2 M6.4 15.4 L10.8 15.4" fill="none" stroke="#a19f9d" stroke-width="1" /></svg>
<svg style="left:1096.20px;top:98.90px;" width="20.00" height="20.00" viewBox="0 0 20 20"><rect x="0.6" y="0.6" width="18.80" height="18.80" fill="#fff" stroke="#3b3a39" stroke-width="1.3"/><rect x="1.2" y="1.2" width="17.6" height="3.2" fill="#c8c6c4"/><path d="M7 4.4 L7 19 M13 4.400 L13 19 M1 9.4 L19 9.400 M1 14.4 L19 14.400" fill="none" stroke="#8a8886" stroke-width="1.1" /><path d="M0.6 4.6 L19.4 4.6" fill="none" stroke="#3b3a39" stroke-width="1.0" /></svg>
<svg style="left:1128.80px;top:98.90px;" width="20.00" height="20.00" viewBox="0 0 20 20"><rect x="0.6" y="0.6" width="18.80" height="18.80" fill="#fff" stroke="#3b3a39" stroke-width="1.3"/><rect x="1.2" y="1.2" width="17.6" height="3.2" fill="#c8c6c4"/><rect x="13" y="4.6" width="6" height="14.4" fill="#86bdeb"/><rect x="1.2" y="14.4" width="17.6" height="4.6" fill="#86bdeb"/><path d="M7 4.4 L7 14.400 M1 9.4 L13 9.400" fill="none" stroke="#8a8886" stroke-width="1.1" /><path d="M13 4.600 L13 19 M1 14.4 L19 14.4 M13 9.4 L19 9.400 M7 14.400 L7 19" fill="none" stroke="#106ebe" stroke-width="1.2" /><path d="M0.6 4.6 L19.4 4.6" fill="none" stroke="#3b3a39" stroke-width="1.0" /></svg>
<svg style="left:1447.90px;top:220.30px;" width="23.00" height="23.00" viewBox="0 0 20 20"><rect x="0.7" y="2.4" width="4.50" height="5.80" fill="#fff" stroke="#3b3a39" stroke-width="1.2"/><rect x="5.2" y="2.4" width="7.40" height="5.80" fill="#86bdeb" stroke="#106ebe" stroke-width="1.4"/><rect x="0.7" y="11.4" width="7.70" height="5.80" fill="#fff" stroke="#3b3a39" stroke-width="1.2"/><rect x="8.4" y="11.4" width="9.20" height="5.80" fill="#c8c6c4" stroke="#7a7876" stroke-width="1.4"/><path d="M0.7 0 L0.7 19.3 L20 19.3" fill="none" stroke="#3b3a39" stroke-width="1.4" /></svg>
<svg style="left:1480.30px;top:220.30px;" width="23.00" height="23.00" viewBox="0 0 20 20"><rect x="2.8" y="14.4" width="5.80" height="4.90" fill="#fff" stroke="#3b3a39" stroke-width="1.2"/><rect x="2.8" y="6.4" width="5.80" height="8.00" fill="#86bdeb" stroke="#106ebe" stroke-width="1.5"/><rect x="11.2" y="11.2" width="5.80" height="8.10" fill="#fff" stroke="#3b3a39" stroke-width="1.2"/><rect x="11.2" y="2.6" width="5.80" height="8.60" fill="#c8c6c4" stroke="#7a7876" stroke-width="1.4"/><path d="M0.7 0 L0.7 19.3 L20 19.3" fill="none" stroke="#3b3a39" stroke-width="1.4" /></svg>
<svg style="left:1512.70px;top:220.30px;" width="23.00" height="23.00" viewBox="0 0 20 20"><rect x="0.7" y="2.6" width="18.30" height="5.60" fill="#86bdeb" stroke="#106ebe" stroke-width="1.4"/><rect x="0.7" y="11" width="12.50" height="5.40" fill="#fff" stroke="#3b3a39" stroke-width="1.4"/><path d="M0.7 0 L0.7 19.3 L20 19.3" fill="none" stroke="#3b3a39" stroke-width="1.4" /></svg>
<svg style="left:1545.10px;top:220.30px;" width="23.00" height="23.00" viewBox="0 0 20 20"><rect x="2" y="1" width="3.40" height="18.30" fill="#86bdeb" stroke="#106ebe" stroke-width="1.3"/><rect x="5.4" y="6" width="3.20" height="13.30" fill="#fff" stroke="#3b3a39" stroke-width="1.1"/><rect x="9.4" y="11" width="4.00" height="8.30" fill="#c8c6c4" stroke="#7a7876" stroke-width="1.1"/><rect x="14" y="6" width="4.40" height="13.30" fill="#fff" stroke="#3b3a39" stroke-width="1.2"/><path d="M0.7 0 L0.7 19.3 L20 19.3" fill="none" stroke="#3b3a39" stroke-width="1.4" /></svg>
<svg style="left:1577.50px;top:220.30px;" width="23.00" height="23.00" viewBox="0 0 20 20"><rect x="0.7" y="2.4" width="3.90" height="5.80" fill="#fff" stroke="#3b3a39" stroke-width="1.2"/><rect x="4.6" y="2.4" width="13.00" height="5.80" fill="#86bdeb" stroke="#106ebe" stroke-width="1.4"/><rect x="0.7" y="11.4" width="10.30" height="5.80" fill="#fff" stroke="#3b3a39" stroke-width="1.2"/><rect x="11" y="11.4" width="6.60" height="5.80" fill="#c8c6c4" stroke="#7a7876" stroke-width="1.4"/><path d="M0.7 0 L0.7 19.3 L20 19.3" fill="none" stroke="#3b3a39" stroke-width="1.4" /></svg>
<svg style="left:1609.90px;top:220.30px;" width="23.00" height="23.00" viewBox="0 0 20 20"><rect x="3" y="14.6" width="5.60" height="4.70" fill="#fff" stroke="#3b3a39" stroke-width="1.2"/><rect x="3" y="2.4" width="5.60" height="12.20" fill="#86bdeb" stroke="#106ebe" stroke-width="1.5"/><rect x="11.4" y="8" width="5.60" height="11.30" fill="#fff" stroke="#3b3a39" stroke-width="1.2"/><rect x="11.4" y="2.4" width="5.60" height="5.60" fill="#c8c6c4" stroke="#7a7876" stroke-width="1.4"/><path d="M0.7 0 L0.7 19.3 L20 19.3" fill="none" stroke="#3b3a39" stroke-width="1.4" /></svg>
<svg style="left:1447.90px;top:252.85px;" width="23.00" height="23.00" viewBox="0 0 20 20"><path d="M1 17 L13.2 4.2 L19.2 10.2" fill="none" stroke="#106ebe" stroke-width="1.3" /><path d="M1 11.6 L6.6 5.2 L12.2 10 L19.2 4.8" fill="none" stroke="#3b3a39" stroke-width="1.3" /><path d="M0.7 0 L0.7 19.3 L20 19.3" fill="none" stroke="#3b3a39" stroke-width="1.4" /></svg>
<svg style="left:1480.30px;top:252.85px;" width="23.00" height="23.00" viewBox="0 0 20 20"><path d="M12 9.4 L15.6 0.8 L19.6 10.4 L19.6 19.4 L12 19.4 Z" fill="#c8c6c4" stroke="#7a7876" stroke-width="1.0" /><path d="M0.5 19.4 L0.5 11.2 L6.6 1.6 L12.4 9.8 L12.4 19.4 Z" fill="#f6f6f6" stroke="#3b3a39" stroke-width="1.2" /><path d="M0.5 19.5 L0.5 12.4 L5.6 17.2 L11.8 8.2 L19.6 19.5 Z" fill="#86bdeb" stroke="#106ebe" stroke-width="1.3" /></svg>
<svg style="left:1512.70px;top:252.85px;" width="23.00" height="23.00" viewBox="0 0 20 20"><path d="M0.7 4.4 L6.6 10.4 L12.6 3 L16 6.4 L19.6 6.4 L19.6 15.4 L13 9.6 L6.6 16.6 L0.7 10.6 Z" fill="#86bdeb" stroke="#106ebe" stroke-width="1.2" /><path d="M0.7 4.4 L6.6 10.4 L12.6 3 L16 6.4 L19.6 6.4" fill="none" stroke="#106ebe" stroke-width="1.8" /><path d="M0.7 0 L0.7 19.3 L20 19.3" fill="none" stroke="#3b3a39" stroke-width="1.4" /></svg>
<svg style="left:1545.10px;top:252.85px;" width="23.00" height="23.00" viewBox="0 0 20 20"><path d="M0.7 2 L19.6 2 L19.6 13.6 L13 8.8 L6.6 15.6 L0.7 10 Z" fill="#86bdeb" stroke="#106ebe" stroke-width="1.3" /><path d="M0.7 2 L19.6 2" fill="none" stroke="#106ebe" stroke-width="1.8" /><path d="M0.7 0 L0.7 19.3 L20 19.3" fill="none" stroke="#3b3a39" stroke-width="1.4" /></svg>
<svg style="left:1577.50px;top:252.85px;" width="23.00" height="23.00" viewBox="0 0 20 20"><rect x="3.2" y="14.2" width="4.60" height="5.10" fill="#fff" stroke="#3b3a39" stroke-width="1"/><rect x="3.2" y="2.8" width="4.60" height="11.40" fill="#86bdeb" stroke="#106ebe" stroke-width="1.3"/><rect x="11.4" y="8" width="4.40" height="11.30" fill="#fff" stroke="#3b3a39" stroke-width="1"/><rect x="11.4" y="2.8" width="4.40" height="5.20" fill="#c8c6c4" stroke="#7a7876" stroke-width="1.2"/><path d="M0.7 0.6 L0.7 19.3 L18.6 19.3" fill="none" stroke="#3b3a39" stroke-width="1.1" /><path d="M1 17 L6.6 9.8 L11.6 14.8 L18.4 7.6" fill="none" stroke="#3b3a39" stroke-width="1.3" /></svg>
<svg style="left:1609.90px;top:252.85px;" width="23.00" height="23.00" viewBox="0 0 20 20"><rect x="2.4" y="7.4" width="5.60" height="11.90" fill="#86bdeb" stroke="#106ebe" stroke-width="1.3"/><rect x="8" y="1.4" width="5.60" height="17.90" fill="#fff" stroke="#3b3a39" stroke-width="1.2"/><rect x="13.6" y="5.4" width="5.20" height="13.90" fill="#c8c6c4" stroke="#7a7876" stroke-width="1.2"/><path d="M0.7 0 L0.7 19.3 L20 19.3" fill="none" stroke="#3b3a39" stroke-width="1.3" /><path d="M1 18 L7.2 9.2 L12.8 15 L19.8 9.4" fill="none" stroke="#3b3a39" stroke-width="1.3" /></svg>
<svg style="left:1447.90px;top:285.40px;" width="23.00" height="23.00" viewBox="0 0 20 20"><path d="M1 3.2 C5 6 6 7.8 9 7.8 C12 7.800 14 4 19.4 1.800 L19.4 6 C14 8 12 12 9 12 C6 12 5 9.500 1 7.600 Z" fill="#c8c6c4" stroke="#7a7876" stroke-width="1.0" /><path d="M1 10.6 L5.5 10.6 C7.5 13.5 10.5 13.5 12.5 10.6 L19.4 9.6 L19.4 13.6 L1 14.6 Z" fill="#f6b24f" stroke="#e07a00" stroke-width="1.0" /><path d="M1 6.4 C4 6.4 5 14.4 9 14.4 C13 14.4 13 6.8 19.4 5.2 L19.4 9.4 C14 10.4 13 17.4 9 17.4 C5 17.4 4 10.6 1 10.6 Z" fill="#86bdeb" stroke="#106ebe" stroke-width="1.2" /><path d="M0.7 0 L0.7 19.3 L20 19.3" fill="none" stroke="#3b3a39" stroke-width="1.4" /></svg>
<svg style="left:1480.30px;top:285.40px;" width="23.00" height="23.00" viewBox="0 0 20 20"><rect x="2.2" y="5.8" width="3.20" height="13.50" fill="#fff" stroke="#3b3a39" stroke-width="1.1"/><rect x="7.8" y="5.8" width="3.00" height="5.80" fill="#c8c6c4" stroke="#7a7876" stroke-width="1.1"/><rect x="10.8" y="1.2" width="2.40" height="10.40" fill="#86bdeb" stroke="#106ebe" stroke-width="1.3"/><rect x="14.8" y="1.2" width="3.60" height="18.10" fill="#fff" stroke="#3b3a39" stroke-width="1.1"/><path d="M0.7 0 L0.7 19.3 L20 19.3" fill="none" stroke="#3b3a39" stroke-width="1.4" /></svg>
<svg style="left:1512.70px;top:285.40px;" width="23.00" height="23.00" viewBox="0 0 20 20"><rect x="0.6" y="1" width="18.80" height="5.80" fill="#86bdeb" stroke="#106ebe" stroke-width="1.3"/><rect x="3" y="6.8" width="14.00" height="6.20" fill="#86bdeb" stroke="#106ebe" stroke-width="1.3"/><rect x="5.8" y="13" width="8.40" height="6.20" fill="#86bdeb" stroke="#106ebe" stroke-width="1.3"/></svg>
<svg style="left:1545.10px;top:285.40px;" width="23.00" height="23.00" viewBox="0 0 20 20"><path d="M0.7 0 L0.7 19.3 L20 19.3" fill="none" stroke="#3b3a39" stroke-width="1.4" /><rect x="3.4" y="4" width="3.2" height="3.2" fill="#86bdeb" stroke="#5aa2de" stroke-width="0.5"/><rect x="8.8" y="7.4" width="3.2" height="3.2" fill="#86bdeb" stroke="#5aa2de" stroke-width="0.5"/><rect x="14.4" y="11.8" width="3.2" height="3.2" fill="#86bdeb" stroke="#5aa2de" stroke-width="0.5"/><rect x="14.4" y="0.8" width="3.1" height="3.1" fill="#3b3a39"/><rect x="3.6" y="13" width="3.1" height="3.1" fill="#3b3a39"/></svg>
<svg style="left:1577.50px;top:285.40px;" width="23.00" height="23.00" viewBox="0 0 20 20"><circle cx="10" cy="10" r="9.5" fill="#f6f6f6" stroke="#3b3a39" stroke-width="1.2"/><path d="M9.4 0.6 A9.5 9.5 0 0 1 16.4 17.2 L9.4 10.6 Z" fill="#86bdeb" stroke="#106ebe" stroke-width="1.3" stroke-linejoin="round"/></svg>
<svg style="left:1609.90px;top:285.40px;" width="23.00" height="23.00" viewBox="0 0 20 20"><path d="M11.63 0.74 A9.4 9.4 0 1 1 0.60 10.00 L5.80 10.00 A4.2 4.2 0 1 0 10.73 5.86 Z" fill="#86bdeb" stroke="#106ebe" stroke-width="1.4" /><path d="M0.60 10.00 A9.4 9.4 0 0 1 4.61 2.30 L7.59 6.56 A4.2 4.2 0 0 0 5.80 10.00 Z" fill="#fff" stroke="#7a7876" stroke-width="1.0" /><path d="M4.61 2.30 A9.4 9.4 0 0 1 11.63 0.74 L10.73 5.86 A4.2 4.2 0 0 0 7.59 6.56 Z" fill="#c8c6c4" stroke="#7a7876" stroke-width="1.0" /></svg>
<svg style="left:1447.90px;top:317.95px;" width="23.00" height="23.00" viewBox="0 0 20 20"><rect x="0.6" y="0.6" width="9.40" height="9.40" fill="#86bdeb" stroke="#106ebe" stroke-width="1.4"/><rect x="0.6" y="10" width="9.40" height="9.40" fill="#86bdeb" stroke="#106ebe" stroke-width="1.4"/><rect x="10" y="0.6" width="9.40" height="6.00" fill="#fff" stroke="#3b3a39" stroke-width="1.2"/><rect x="10" y="6.6" width="4.60" height="12.80" fill="#fff" stroke="#3b3a39" stroke-width="1.2"/><rect x="14.6" y="6.6" width="4.80" height="6.40" fill="#fff" stroke="#3b3a39" stroke-width="1.2"/><rect x="14.6" y="13" width="4.80" height="6.40" fill="#fff" stroke="#3b3a39" stroke-width="1.2"/></svg>
<svg style="left:1480.30px;top:317.95px;" width="23.00" height="23.00" viewBox="0 0 20 20"><circle cx="10.6" cy="8.6" r="6.4" fill="#fff" stroke="#3b3a39" stroke-width="1.5"/><path d="M8.4 5 C9.5 3.4 11 3.2 12.4 3.8 L13 5.8 L11.2 6.4 L10.6 8.4 L8.6 8.8 L7.6 7 Z M12.8 7.2 L15 6.6 L15.8 9.4 L14 10.6 Z M9 11 L12.6 10.8 L12.4 13.6 L10 14 Z" fill="#2e9a47" stroke="none" stroke-width="0" /><path d="M9 0.8 C3 2.600 0.6 9.2 4.2 14 C8 18.6 15.5 17.6 18 13" fill="none" stroke="#3b3a39" stroke-width="1.3" /><path d="M10.4 17 L10.4 19.3 M3.6 19.3 L17.2 19.3" fill="none" stroke="#3b3a39" stroke-width="1.3" /></svg>
<svg style="left:1512.70px;top:317.95px;" width="23.00" height="23.00" viewBox="0 0 20 20"><path d="M1 1.6 L7 1.2 L9.5 3.6 L12.6 2.800 L14.4 1 L19.4 0.800 L19.4 9 C19.4 12.5 17.8 15 15.4 16 L13.4 18.4 L10 18.8 L9.4 17.200 L7 18 L3.6 14.800 L1.6 11.800 L2.6 6.6 Z" fill="#c8c6c4" stroke="#3b3a39" stroke-width="1.2" stroke-linejoin="round"/><path d="M1 1.6 L7 1.2 L8.6 5.4 L8 9.800 L3 10.2 L2.600 6.600 Z" fill="#86bdeb" stroke="#106ebe" stroke-width="1.1" stroke-linejoin="round"/><path d="M12.2 10 L19.4 9.400 C19.4 12.5 17.800 15 15.400 16 L13.400 18.400 L10.6 18.6 L10.8 14.2 L12.400 13.2 Z" fill="#86bdeb" stroke="#106ebe" stroke-width="1.1" stroke-linejoin="round"/></svg>
<svg style="left:1545.10px;top:317.95px;" width="23.00" height="23.00" viewBox="0 0 20 20"><path d="M1 1.6 L7 1.2 L9.5 3.6 L12.6 2.800 L14.4 1 L19.4 0.800 L19.4 9 C19.4 12.5 17.8 15 15.4 16 L13.4 18.4 L10 18.8 L9.4 17.200 L7 18 L3.6 14.800 L1.6 11.800 L2.6 6.6 Z" fill="#f6f6f6" stroke="#3b3a39" stroke-width="1.2" stroke-linejoin="round"/><path d="M1 1.6 L7 1.2 L8.6 5.4 L8 9.800 L3 10.2 L2.600 6.600 Z" fill="#fff" stroke="#2b88d8" stroke-width="1.1" stroke-linejoin="round"/><path d="M12.2 10 L19.4 9.400 C19.4 12.5 17.800 15 15.400 16 L13.400 18.400 L10.6 18.6 L10.8 14.2 L12.400 13.2 Z" fill="#fff" stroke="#2b88d8" stroke-width="1.1" stroke-linejoin="round"/></svg>
<svg style="left:1577.50px;top:317.95px;" width="23.00" height="23.00" viewBox="0 0 20 20"><path d="M11.6 -1.5 L17.8 21.6 L12 15.4 Z" fill="#0f78d4"/><path d="M11.6 -1.5 L12 15.400 L-0.4 18.4 Z" fill="#3a9ad0"/><path d="M12 15.4 L17.8 21.6 L14.5 11 Z" fill="#0a5cb0" opacity=".55"/></svg>
<svg style="left:1609.90px;top:317.95px;" width="23.00" height="23.00" viewBox="0 0 20 20"><path d="M0.20 13.20 A9.8 9.8 0 0 1 5.86 4.32 L7.72 8.31 A5.4 5.4 0 0 0 4.60 13.20 Z" fill="#f6f6f6" stroke="#3b3a39" stroke-width="1.2" /><path d="M5.86 4.32 A9.8 9.8 0 0 1 19.80 13.20 L15.40 13.20 A5.4 5.4 0 0 0 7.72 8.31 Z" fill="#86bdeb" stroke="#106ebe" stroke-width="1.3" /><path d="M9.2 13.4 L14.2 8.6" fill="none" stroke="#3b3a39" stroke-width="1.5" /><circle cx="9.6" cy="13" r="1.2" fill="#3b3a39"/></svg>
<svg style="left:1447.90px;top:349.60px;" width="23.00" height="23.00" viewBox="0 0 20 20"><rect x="0.7" y="2.8" width="18.60" height="14.40" fill="#f6f6f6" stroke="#3b3a39" stroke-width="1.4"/><text x="10" y="12.6" font-family="Liberation Sans,sans-serif" font-size="9.6" fill="#2b88d8" text-anchor="middle" >123</text><path d="M2.6 14.800 L17.4 14.800" fill="none" stroke="#a19f9d" stroke-width="1" /></svg>
<svg style="left:1480.30px;top:349.60px;" width="23.00" height="23.00" viewBox="0 0 20 20"><rect x="0.6" y="0.6" width="18.80" height="18.80" fill="#f6f6f6" stroke="#3b3a39" stroke-width="1.3"/><path d="M4.3 2.6 L4.3 17.4" fill="none" stroke="#7a7876" stroke-width="0.9" /><path d="M6.4 5.2 L15.8 5.2 M6.4 12.4 L15.8 12.4" fill="none" stroke="#0f5fb5" stroke-width="1.9" /><path d="M6.4 8.2 L10.8 8.2 M6.4 15.4 L10.8 15.4" fill="none" stroke="#a19f9d" stroke-width="1" /></svg>
<svg style="left:1512.70px;top:349.60px;" width="23.00" height="23.00" viewBox="0 0 20 20"><rect x="0.7" y="2.4" width="18.60" height="14.80" fill="#f6f6f6" stroke="#3b3a39" stroke-width="1.3"/><path d="M3.4 11.2 L6.8 5.4 L10.2 11.2 Z" fill="#c7e5c9" stroke="#2e9a47" stroke-width="1.1" /><path d="M10.800 5.6 L17.2 5.6 L14 11 Z" fill="#e8414d" stroke="#d13438" stroke-width="0.8" /><path d="M2.800 14 L17.200 14" fill="none" stroke="#a19f9d" stroke-width="1" /></svg>
<svg style="left:1545.10px;top:349.60px;" width="23.00" height="23.00" viewBox="0 0 20 20"><rect x="0.6" y="0.6" width="18.80" height="18.80" fill="#fff" stroke="#3b3a39" stroke-width="1.3"/><rect x="1.2" y="1.2" width="17.6" height="3" fill="#c8c6c4"/><rect x="3.6" y="6.6" width="3.40" height="3.00" fill="#c8c6c4" stroke="#7a7876" stroke-width="0.9"/><rect x="3.6" y="11.8" width="3.40" height="3.00" fill="#c8c6c4" stroke="#7a7876" stroke-width="0.9"/><rect x="9" y="8.4" width="12" height="12.6" fill="#fff"/><path d="M9.2 9 L20.6 9 L16.6 13.6 L16.6 20 L13.200 20 L13.200 13.600 Z" fill="#fff" stroke="#3b3a39" stroke-width="1.3" stroke-linejoin="miter"/></svg>
<svg style="left:1577.50px;top:349.60px;" width="23.00" height="23.00" viewBox="0 0 20 20"><rect x="0.6" y="0.6" width="18.80" height="18.80" fill="#fff" stroke="#3b3a39" stroke-width="1.3"/><rect x="1.2" y="1.2" width="17.6" height="3.2" fill="#c8c6c4"/><path d="M7 4.4 L7 19 M13 4.400 L13 19 M1 9.4 L19 9.400 M1 14.4 L19 14.400" fill="none" stroke="#8a8886" stroke-width="1.1" /><path d="M0.6 4.6 L19.4 4.6" fill="none" stroke="#3b3a39" stroke-width="1.0" /></svg>
<svg style="left:1609.90px;top:349.60px;" width="23.00" height="23.00" viewBox="0 0 20 20"><rect x="0.6" y="0.6" width="18.80" height="18.80" fill="#fff" stroke="#3b3a39" stroke-width="1.3"/><rect x="1.2" y="1.2" width="17.6" height="3.2" fill="#c8c6c4"/><rect x="13" y="4.6" width="6" height="14.4" fill="#86bdeb"/><rect x="1.2" y="14.4" width="17.6" height="4.6" fill="#86bdeb"/><path d="M7 4.4 L7 14.400 M1 9.4 L13 9.400" fill="none" stroke="#8a8886" stroke-width="1.1" /><path d="M13 4.600 L13 19 M1 14.4 L19 14.4 M13 9.4 L19 9.400 M7 14.400 L7 19" fill="none" stroke="#106ebe" stroke-width="1.2" /><path d="M0.6 4.6 L19.4 4.6" fill="none" stroke="#3b3a39" stroke-width="1.0" /></svg>
<svg style="left:1447.90px;top:383.05px;" width="23.00" height="23.00" viewBox="0 0 20 20"><text x="10" y="16.4" font-family="Liberation Sans,sans-serif" font-size="17.5" font-weight="700" fill="#1a7bb9" text-anchor="middle" >R</text></svg>
<svg style="left:1480.30px;top:383.05px;" width="23.00" height="23.00" viewBox="0 0 20 20"><text x="10" y="14.6" font-family="Liberation Sans,sans-serif" font-size="17.5" font-weight="700" fill="#1a7bb9" text-anchor="middle" textLength="20" lengthAdjust="spacingAndGlyphs">Py</text></svg>
<svg style="left:1512.70px;top:383.05px;" width="23.00" height="23.00" viewBox="0 0 20 20"><path d="M0.7 0 L0.7 19.3 L20 19.3" fill="none" stroke="#3b3a39" stroke-width="1.4" /><path d="M0.7 3.6 L14.6 3.6" fill="none" stroke="#106ebe" stroke-width="1.2" /><circle cx="16.6" cy="3.6" r="2.1" fill="#86bdeb" stroke="#106ebe" stroke-width="1.1"/><path d="M0.7 9.4 L10.4 9.400 M0.7 13.8 L6 13.8" fill="none" stroke="#7a7876" stroke-width="1" /><circle cx="11.8" cy="9.4" r="1.4" fill="#fff" stroke="#7a7876" stroke-width="0.9"/><circle cx="7.4" cy="13.8" r="1.4" fill="#fff" stroke="#7a7876" stroke-width="0.9"/></svg>
<svg style="left:1545.10px;top:383.05px;" width="23.00" height="23.00" viewBox="0 0 20 20"><path d="M6.6 10 L10.6 10 M10.6 2.8 L10.600 17 M10.6 2.800 L13.4 2.800 M10.600 10 L13.400 10 M10.600 17 L13.400 17" fill="none" stroke="#3b3a39" stroke-width="1.3" /><rect x="0.6" y="7.6" width="6.00" height="4.80" fill="#86bdeb" stroke="#106ebe" stroke-width="1.2"/><rect x="13.4" y="0.6" width="6.00" height="4.40" fill="#86bdeb" stroke="#106ebe" stroke-width="1.2"/><rect x="13.4" y="7.8" width="6.00" height="4.40" fill="#86bdeb" stroke="#106ebe" stroke-width="1.2"/><rect x="13.4" y="14.8" width="6.00" height="4.40" fill="#86bdeb" stroke="#106ebe" stroke-width="1.2"/></svg>
<svg style="left:1577.50px;top:383.05px;" width="23.00" height="23.00" viewBox="0 0 20 20"><path d="M0.800 1.4 L19.2 1.4 L19.2 13.800 L8 13.800 L3.800 18.2 L3.800 13.800 L0.800 13.800 Z" fill="#fff" stroke="#106ebe" stroke-width="1.4" stroke-linejoin="miter"/></svg>
<svg style="left:1609.90px;top:383.05px;" width="23.00" height="23.00" viewBox="0 0 20 20"><path d="M3 7 L3 0.800 L12.200 0.800 L17 5.600 L17 19.2 L3 19.2 L3 12" fill="#fff" stroke="#3b3a39" stroke-width="1.3" /><path d="M12.2 0.8 L12.200 5.600 L17 5.600" fill="none" stroke="#3b3a39" stroke-width="1.0" /><circle cx="3" cy="9.4" r="1.9" fill="#86bdeb" stroke="#106ebe" stroke-width="1.1"/><path d="M6.600 9.4 L14 9.4 M6.6 12.6 L11.600 12.600" fill="none" stroke="#2b88d8" stroke-width="1.1" /></svg>
<svg style="left:1447.90px;top:415.60px;" width="23.00" height="23.00" viewBox="0 0 20 20"><path d="M4.6 2.2 L15.400 2.200 L15.400 8 C15.400 11.600 13 13.400 10 13.400 C7 13.400 4.600 11.600 4.600 8 Z" fill="#fff" stroke="#3b3a39" stroke-width="1.3" /><path d="M4.600 3.600 L1 3.600 C1 7.800 2.600 9.400 5.200 9.600 M15.400 3.600 L19 3.600 C19 7.800 17.400 9.400 14.800 9.600" fill="none" stroke="#3b3a39" stroke-width="1.3" /><path d="M8.4 13.2 L8 16.2 L12 16.2 L11.600 13.200" fill="#fff" stroke="#3b3a39" stroke-width="1.2" /><rect x="4.6" y="1" width="10.8" height="2.6" fill="#86bdeb" stroke="#106ebe" stroke-width="1"/><rect x="5" y="16.6" width="10" height="2.6" rx="1" fill="#86bdeb" stroke="#106ebe" stroke-width="1"/></svg>
<svg style="left:1480.30px;top:415.60px;" width="23.00" height="23.00" viewBox="0 0 20 20"><path d="M2.600 0.800 L11.800 0.800 L17.2 6.2 L17.2 19.2 L2.600 19.2 Z" fill="#fff" stroke="#3b3a39" stroke-width="1.4" /><path d="M11.8 0.8 L11.800 6.200 L17.200 6.200" fill="none" stroke="#3b3a39" stroke-width="1.0" /><rect x="5" y="12.4" width="2.4" height="4.8" fill="#3b3a39"/><rect x="8.8" y="14.4" width="2.4" height="2.8" fill="#3b3a39"/><rect x="12.6" y="9.4" width="2.400" height="7.800" fill="#3b3a39"/></svg>
<svg style="left:1512.70px;top:415.60px;" width="23.00" height="23.00" viewBox="0 0 20 20"><rect x="1.4" y="3.6" width="18.20" height="13.20" fill="#fff" stroke="#3b3a39" stroke-width="1.3"/><text x="11.4" y="13" font-family="Liberation Sans,sans-serif" font-size="9.4" fill="#2b88d8" text-anchor="middle" >123</text><path d="M3.400 14.800 L17.600 14.800" fill="none" stroke="#a19f9d" stroke-width="1" /><path d="M2.6 -0.6 L9.2 -0.6 L5.6 5.4 L9 5.400 L0.2 13 L3.400 7.200 L0.200 7.200 Z" fill="#fafafa" stroke="#fff" stroke-width="1.6"/><path d="M2.6 -0.6 L9.2 -0.6 L5.6 5.400 L9 5.400 L0.2 13 L3.400 7.200 L0.200 7.200 Z" fill="#fbd982" stroke="#e07a00" stroke-width="1.0" stroke-linejoin="miter"/></svg>
<svg style="left:1545.10px;top:415.60px;" width="23.00" height="23.00" viewBox="0 0 20 20"><rect x="11" y="1.8" width="6.60" height="6.20" fill="#fff" stroke="#7a7876" stroke-width="1.1"/><rect x="1.8" y="11.2" width="6.60" height="6.20" fill="#fff" stroke="#7a7876" stroke-width="1.1"/><rect x="6.4" y="5.6" width="3.00" height="3.40" fill="#86bdeb" stroke="#106ebe" stroke-width="0.8"/><rect x="9.8" y="12" width="2.60" height="4.20" fill="#fff" stroke="#7a7876" stroke-width="0.9"/><rect x="9.4" y="9" width="11.6" height="12" fill="#fff"/><path d="M9.800 9.6 L20.600 9.6 L16.800 14 L16.800 20.2 L13.600 20.2 L13.600 14 Z" fill="#fff" stroke="#3b3a39" stroke-width="1.3" /><path d="M2.6 -0.6 L9.2 -0.6 L5.6 5.4 L9 5.400 L0.2 13 L3.400 7.200 L0.200 7.200 Z" fill="#fafafa" stroke="#fff" stroke-width="1.6"/><path d="M2.6 -0.6 L9.2 -0.6 L5.6 5.400 L9 5.400 L0.2 13 L3.400 7.200 L0.200 7.200 Z" fill="#fbd982" stroke="#e07a00" stroke-width="1.0" stroke-linejoin="miter"/></svg>
<svg style="left:1577.50px;top:415.60px;" width="23.00" height="23.00" viewBox="0 0 20 20"><path d="M8 2.400 L18.600 2.400 L18.600 9 M9 18.600 L1.400 18.600 L1.400 11" fill="#fff" stroke="#3b3a39" stroke-width="1.2" /><text x="9.4" y="15" font-family="Liberation Sans,sans-serif" font-size="12.5" fill="#2b88d8" text-anchor="middle" >A</text><rect x="9.4" y="9" width="11.6" height="12" fill="#fff"/><path d="M9.800 9.6 L20.600 9.6 L16.800 14 L16.800 20.2 L13.600 20.2 L13.600 14 Z" fill="#fff" stroke="#3b3a39" stroke-width="1.3" /><path d="M2.6 -0.6 L9.2 -0.6 L5.6 5.4 L9 5.400 L0.2 13 L3.400 7.200 L0.200 7.200 Z" fill="#fafafa" stroke="#fff" stroke-width="1.6"/><path d="M2.6 -0.6 L9.2 -0.6 L5.6 5.400 L9 5.400 L0.2 13 L3.400 7.200 L0.200 7.200 Z" fill="#fbd982" stroke="#e07a00" stroke-width="1.0" stroke-linejoin="miter"/></svg>
<svg style="left:1609.90px;top:415.60px;" width="23.00" height="23.00" viewBox="0 0 20 20"><path d="M9 2.400 L18.600 2.400 L18.600 9 M9 18.600 L1.400 18.600 L1.400 11" fill="#fff" stroke="#3b3a39" stroke-width="1.2" /><path d="M9.6 6.400 L16.400 6.400" fill="none" stroke="#7a7876" stroke-width="1" /><rect x="4.6" y="11.8" width="2.20" height="2.20" fill="#fff" stroke="#7a7876" stroke-width="0.8"/><path d="M7.6 13 L9 13" fill="none" stroke="#7a7876" stroke-width="0.8" /><rect x="9.4" y="9" width="11.6" height="12" fill="#fff"/><path d="M9.800 9.6 L20.600 9.6 L16.800 14 L16.800 20.2 L13.600 20.2 L13.600 14 Z" fill="#fff" stroke="#3b3a39" stroke-width="1.3" /><path d="M2.6 -0.6 L9.2 -0.6 L5.6 5.4 L9 5.400 L0.2 13 L3.400 7.200 L0.200 7.200 Z" fill="#fafafa" stroke="#fff" stroke-width="1.6"/><path d="M2.6 -0.6 L9.2 -0.6 L5.6 5.400 L9 5.400 L0.2 13 L3.400 7.200 L0.200 7.200 Z" fill="#fbd982" stroke="#e07a00" stroke-width="1.0" stroke-linejoin="miter"/></svg>
<svg style="left:1447.90px;top:448.15px;" width="23.00" height="23.00" viewBox="0 0 20 20"><path d="M4 1.400 L19 1.400 L19 8 M1.400 11 L1.400 19 L13 19" fill="none" stroke="#106ebe" stroke-width="1.6" /><path d="M19 4 L14.400 4.600 L12.600 8.200 L9.400 9.200 L9.800 12.600 L7 14 L6.400 18.400 L10.200 18.400 L12.200 14.600 L15.200 12.800 L15.200 9.600 L19 7.600 Z" fill="#86bdeb" stroke="#2b88d8" stroke-width="0.8" /><path d="M3.2 -1.4 C5.400 -1.400 6.600 0.2 6.600 2 C6.600 4.400 3.200 8.800 3.200 8.800 C3.200 8.800 -0.200 4.400 -0.200 2 C-0.200 0.200 1 -1.400 3.200 -1.400 Z" fill="#d86c00"/><circle cx="3.2" cy="2" r="1.3" fill="#fff"/><circle cx="17" cy="16.8" r="2.9" fill="#d86c00"/><circle cx="19.4" cy="11.4" r="1.6" fill="#d86c00"/></svg>
<svg style="left:1480.30px;top:448.15px;" width="23.00" height="23.00" viewBox="0 0 20 20"><path d="M0.40000000000000036 10 L7 3.4000000000000004 Q8 2.4000000000000004 9 3.4000000000000004 L15.6 10 L9 16.6 Q8 17.6 7 16.6 Z" fill="#fff" stroke="#8c2aa8" stroke-width="1.2" stroke-linejoin="round"/><path d="M5.4 10 L11.4 4 Q12.4 3 13.4 4 L19.4 10 L13.4 16 Q12.4 17 11.4 16 Z" fill="none" stroke="#8c2aa8" stroke-width="1.1" stroke-linejoin="round"/></svg>
<svg style="left:1512.70px;top:448.15px;" width="23.00" height="23.00" viewBox="0 0 20 20"><path d="M0.800 2 L13 2 L19.400 9.800 L13 17.800 L0.800 17.800 L7.400 9.800 Z" fill="#fff" stroke="#0f78d4" stroke-width="1.3" stroke-linejoin="round"/><path d="M5.200 17.800 L15 6 M10 17.800 L17.400 8.800" fill="none" stroke="#0f78d4" stroke-width="1.1" /></svg>
<svg style="left:1545.10px;top:448.15px;" width="23.00" height="23.00" viewBox="0 0 20 20"><circle cx="4.6" cy="7" r="1.05" fill="#3b3a39"/><circle cx="10" cy="7" r="1.05" fill="#3b3a39"/><circle cx="15.4" cy="7" r="1.05" fill="#3b3a39"/></svg>
<svg style="left:0px;top:0px;" width="1918" height="972" viewBox="0 0 1918 972"><path d="M17.4 172.4 L17.4 189 L33.8 189" fill="none" stroke="#252423" stroke-width="1.4"/><rect x="19.8" y="176" width="3.0" height="10.8" fill="none" stroke="#252423" stroke-width="1.3"/><rect x="24.5" y="181.2" width="3.0" height="5.6" fill="none" stroke="#252423" stroke-width="1.3"/><rect x="29.4" y="174.2" width="3.0" height="12.6" fill="none" stroke="#252423" stroke-width="1.3"/><rect x="15.9" y="221" width="19.4" height="17.6" fill="none" stroke="#7a7876" stroke-width="1.4"/><path d="M15.9 225.4 L35.3 225.4 M15.9 229.8 L35.300 229.8 M15.900 234.200 L35.300 234.200 M22.400 225.400 L22.400 238.600 M28.800 225.400 L28.800 238.600" stroke="#7a7876" stroke-width="1.2" fill="none"/><path d="M15.9 223.200 L35.300 223.200" stroke="#7a7876" stroke-width="1.2" opacity=".5"/><rect x="14.6" y="276.4" width="8.6" height="8.4" fill="none" stroke="#7a7876" stroke-width="1.3"/><path d="M14.6 279.4 L23.2 279.4" stroke="#7a7876" stroke-width="1.1"/><rect x="27.6" y="269.6" width="8.8" height="8.4" fill="none" stroke="#7a7876" stroke-width="1.3"/><path d="M27.6 272.6 L36.4 272.6" stroke="#7a7876" stroke-width="1.1"/><rect x="27.6" y="282.8" width="8.800" height="8.4" fill="none" stroke="#7a7876" stroke-width="1.3"/><path d="M27.6 285.8 L36.400 285.800" stroke="#7a7876" stroke-width="1.1"/><path d="M23.2 279 L25.4 279 L25.400 273.800 L27.600 273.800 M23.200 282.400 L25.400 282.400 L25.400 287 L27.600 287" fill="none" stroke="#7a7876" stroke-width="1.2"/><path d="M18.6 331.5 L18.600 323 Q18.600 320.800 20.800 320.800 L26.200 320.800 L31 325.600 L31 331" fill="none" stroke="#7a7876" stroke-width="1.3"/><path d="M26.2 320.8 L26.200 325.600 L31 325.600" fill="none" stroke="#7a7876" stroke-width="1.1"/><path d="M32.6 327.5 C34.5 331 34.2 336 31.6 339.200" fill="none" stroke="#7a7876" stroke-width="1.2"/><text x="12.6" y="340.4" font-family="Liberation Sans,sans-serif" font-size="8.2" fill="#6b6967" textLength="18.6" lengthAdjust="spacingAndGlyphs">DAX</text><path d="M19 381.600 L19 373 Q19 370.800 21.200 370.800 L26.800 370.800 L31.600 375.600 L31.600 381.400" fill="none" stroke="#7a7876" stroke-width="1.3"/><path d="M26.8 370.8 L26.800 375.600 L31.600 375.600" fill="none" stroke="#7a7876" stroke-width="1.1"/><text x="14.2" y="390.6" font-family="Liberation Sans,sans-serif" font-size="8.2" fill="#6b6967" textLength="22.8" lengthAdjust="spacingAndGlyphs">TMDL</text><rect x="121.6" y="320" width="6.200" height="13.400" fill="#fff" stroke="#252423" stroke-width="1.3"/><rect x="127.8" y="312.2" width="6.4" height="21.2" fill="#fff" stroke="#252423" stroke-width="1.3"/><rect x="134.2" y="318" width="6.400" height="15.400" fill="#fff" stroke="#252423" stroke-width="1.3"/><path d="M122 309.400 L128.400 309.400 L125 315 L128 315 L119.400 323.600 L122.400 317 L119.400 317 Z" fill="#fbd982" stroke="#e07a00" stroke-width="1" stroke-linejoin="miter"/><path d="M140.400 363.200 C137 366 133 370 130.600 373.800 L132.600 375.400 C135.600 372.400 138.800 368 140.400 363.200 Z" fill="#fff" stroke="#252423" stroke-width="1.1" stroke-linejoin="round"/><path d="M130.400 373.400 C127.500 372.800 125.500 374.500 124.600 376 C123.600 377.800 121.800 378.200 119.400 377.600 C122.500 380.200 128 380.600 130.800 378.600 C132.600 377.200 133 375.200 132.400 374.600 Z" fill="#3a8fd6" stroke="#1b6ec2" stroke-width="0.8"/><path d="M137 373.400 L137 383.400 M132 378.400 L142 378.400" stroke="#2e9a47" stroke-width="1.5" fill="none"/><rect x="1880" y="155.5" width="38.500" height="39.300" fill="#e5e4e3" stroke="#8a8886" stroke-width="1"/><rect x="1880" y="196.3" width="38.500" height="38.800" fill="#e5e4e3" stroke="#8a8886" stroke-width="1"/><path d="M1892.5 169 L1892.500 182.500 C1892.500 184.800 1896 186.400 1900.400 186.400 C1904.800 186.400 1908.200 184.800 1908.200 182.500 L1908.200 169" fill="none" stroke="#252423" stroke-width="1.4"/><ellipse cx="1900.35" cy="168.8" rx="7.85" ry="3.8" fill="none" stroke="#252423" stroke-width="1.4"/><path d="M1895.6 227.400 L1890.200 227.400 L1890.200 214.800 L1895.600 214.800 L1895.600 205.600 L1901.600 205.600 L1901.600 211 L1905 211 L1905 213" fill="none" stroke="#252423" stroke-width="1.3"/><path d="M1895.600 214.800 L1895.600 227.400 L1900.500 227.400" fill="none" stroke="#252423" stroke-width="1.3"/><path d="M1902 216.400 L1902 225.600 C1902 227 1904.200 227.800 1907 227.800 C1909.800 227.800 1912 227 1912 225.600 L1912 216.400" fill="#fff" stroke="#e07a00" stroke-width="1.3"/><ellipse cx="1907" cy="216.2" rx="5" ry="2.4" fill="#fff" stroke="#e07a00" stroke-width="1.3"/><path d="M1896 266 L1890.400 266 L1890.400 254.600 L1896 254.600 L1896 245.600 L1902 245.600 L1902 250.800 L1905.600 250.800 L1905.600 254" fill="none" stroke="#252423" stroke-width="1.3"/><path d="M1896 254.600 L1896 262" fill="none" stroke="#252423" stroke-width="1.3"/><path d="M1912 251.600 C1908.600 254.200 1905.400 257.800 1903.400 261 L1905.200 262.600 C1908 259.800 1910.800 256 1912 251.600 Z" fill="#fff" stroke="#252423" stroke-width="1.1" stroke-linejoin="round"/><path d="M1903.200 260.800 C1900.500 260.200 1898.800 261.800 1898 263.200 C1897.200 264.800 1895.600 265.200 1893.600 264.800 C1896.400 267.200 1901.200 267.400 1903.600 265.600 C1905.200 264.400 1905.600 262.600 1905 262 Z" fill="#3a8fd6" stroke="#1b6ec2" stroke-width="0.8"/><path d="M1894.400 286.200 L1906.400 286.200 L1906.400 306.200 L1900.400 300.600 L1894.400 306.200 Z" fill="none" stroke="#252423" stroke-width="1.4" stroke-linejoin="miter"/><path d="M1903.4 320.6 L1911.4 320.6 L1911.4 334.5 M1904.5 325.6 L1911.400 325.600 M1904.5 330.4 L1911.400 330.400 M1889.8 337.6 L1889.8 346.6 L1902.5 346.6 M1892.6 341.400 L1900.6 341.400" fill="none" stroke="#252423" stroke-width="1.2"/><path d="M1899.8 336.3 L1913.2 336.3 L1908.6 341.4 L1908.6 347.8 L1904.600 347.800 L1904.600 341.400 Z" fill="#f8f7f6" stroke="#252423" stroke-width="1.35" stroke-linejoin="miter"/><path d="M1888.2 327.2 C1888.8 322.79999999999995 1891.8 320.99999999999994 1895.2 320.99999999999994 C1897.8 320.99999999999994 1899.8 322.59999999999997 1900.8 324.79999999999995" fill="none" stroke="#2e9a47" stroke-width="1.7"/><path d="M1901.3999999999999 319.0 L1901.3999999999999 325.2 L1895.2 325.2" fill="none" stroke="#2e9a47" stroke-width="1.7"/><path d="M1901.3999999999999 329.59999999999997 C1900.8 334.0 1897.8 335.8 1894.3999999999999 335.8 C1891.8 335.8 1889.8 334.2 1888.8 332.0" fill="none" stroke="#2e9a47" stroke-width="1.7"/><path d="M1888.2 337.79999999999995 L1888.2 331.59999999999997 L1894.3999999999999 331.59999999999997" fill="none" stroke="#2e9a47" stroke-width="1.7"/><rect x="1897.400" y="366" width="14" height="14" fill="#f9c77c" stroke="#e07a00" stroke-width="1.2"/><rect x="1890" y="375.600" width="11.600" height="11.400" fill="#fff" stroke="#252423" stroke-width="1.3"/><path d="M1902.600 372.600 L1902.600 386.400 L1905.600 383.600 L1908 388.800 L1910.200 387.800 L1907.800 382.800 L1912 382.400 Z" fill="#fff" stroke="#252423" stroke-width="1.1" stroke-linejoin="round"/><path d="M1900.200 405 L1900.200 426.400 M1889.600 415.700 L1911 415.700" stroke="#252423" stroke-width="1.5" fill="none"/><path d="M1911.52 924.24 L1911.52 928.36 L1908.46 928.40 L1907.32 931.15 L1909.46 933.34 L1906.54 936.26 L1904.35 934.12 L1901.60 935.26 L1901.56 938.32 L1897.44 938.32 L1897.40 935.26 L1894.65 934.12 L1892.46 936.26 L1889.54 933.34 L1891.68 931.15 L1890.54 928.40 L1887.48 928.36 L1887.48 924.24 L1890.54 924.20 L1891.68 921.45 L1889.54 919.26 L1892.46 916.34 L1894.65 918.48 L1897.40 917.34 L1897.44 914.28 L1901.56 914.28 L1901.60 917.34 L1904.35 918.48 L1906.54 916.34 L1909.46 919.26 L1907.32 921.45 L1908.46 924.20 Z" fill="none" stroke="#252423" stroke-width="1.4" stroke-linejoin="round"/><circle cx="1899.5" cy="926.3" r="3.8" fill="none" stroke="#252423" stroke-width="1.4"/><path d="M1880 906 L1918 906" stroke="#e1dfdd" stroke-width="1"/></svg>
</body></html>
